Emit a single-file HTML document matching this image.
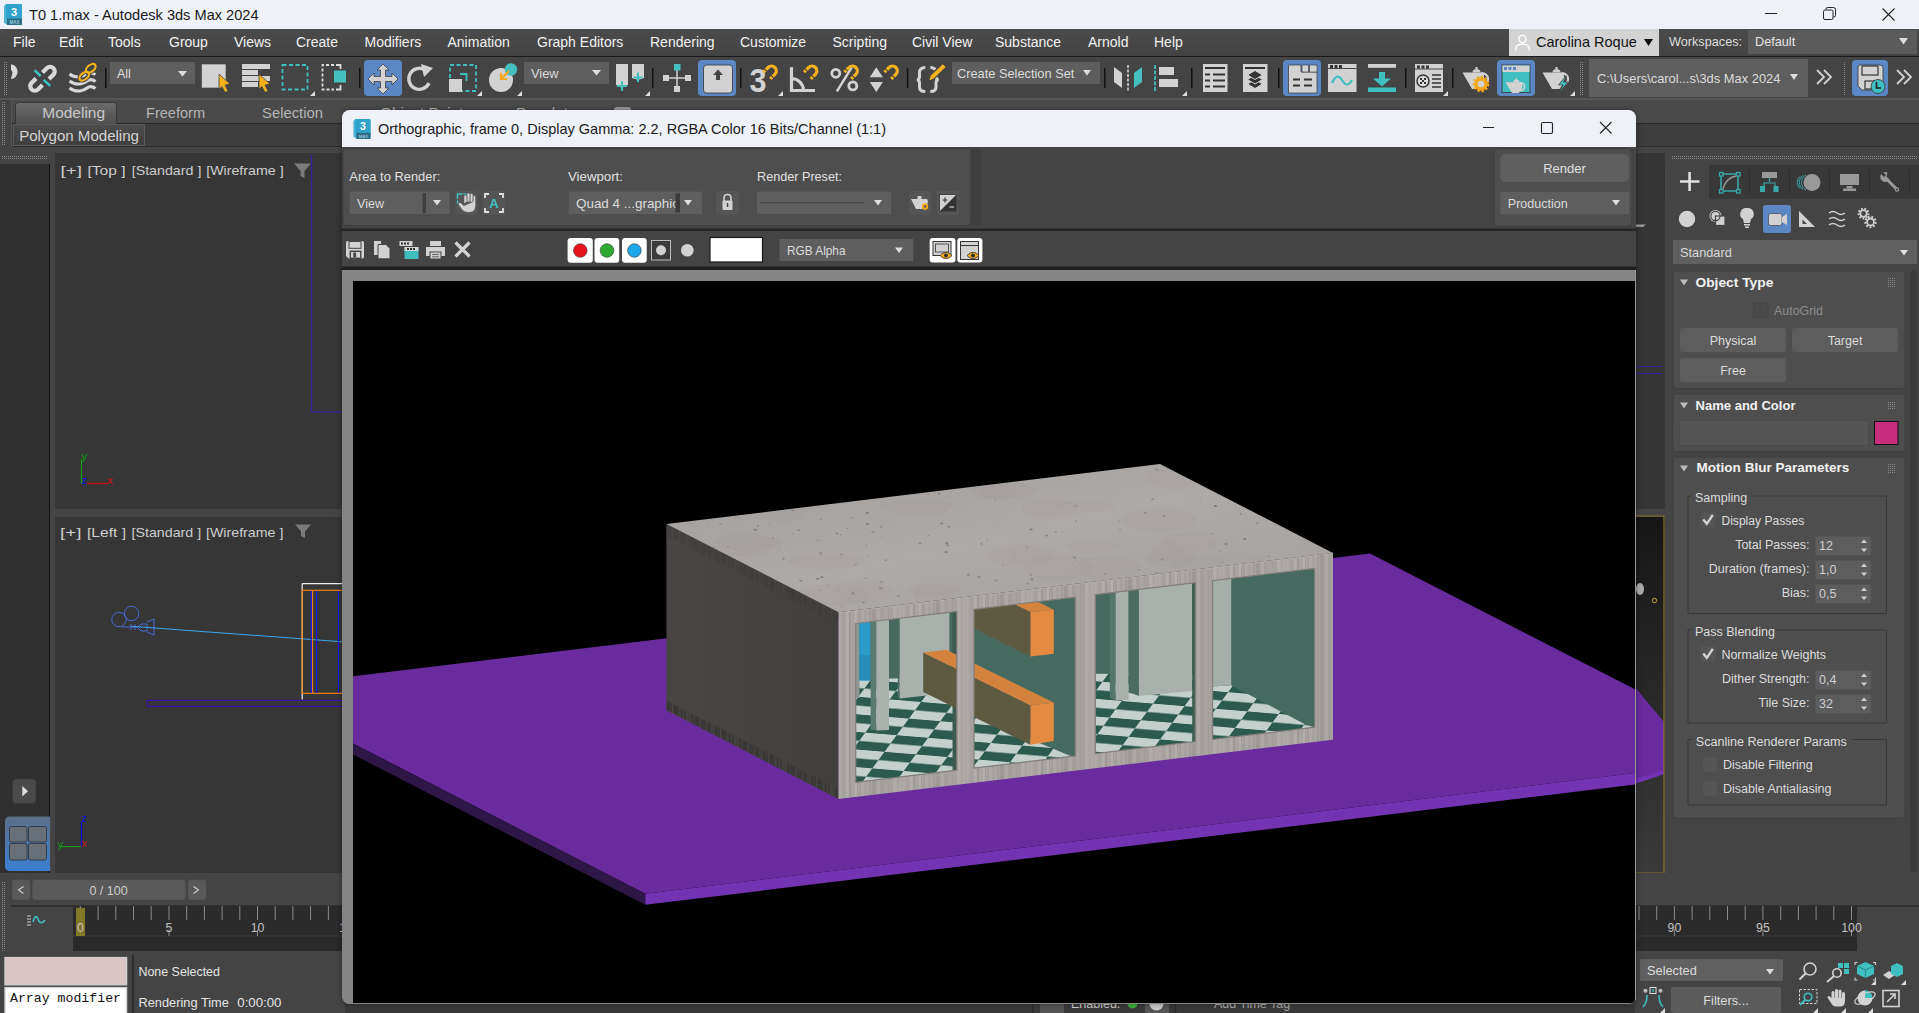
<!DOCTYPE html>
<html><head><meta charset="utf-8">
<style>
*{box-sizing:border-box;margin:0;padding:0}
html,body{width:1919px;height:1013px;overflow:hidden;background:#444}
body{position:relative;font-family:"Liberation Sans",sans-serif;color:#ddd}
.a{position:absolute}
.t{position:absolute;white-space:nowrap;line-height:1}
svg{position:absolute;overflow:visible}
</style></head><body>
<!-- TITLE BAR -->
<div class="a" style="left:0;top:0;width:1919px;height:29px;background:#eff1f8"></div>
<svg style="left:3px;top:4px" width="19" height="21" viewBox="0 0 19 21">
  <path d="M1 2 L3 0 H17 L19 2 V19 L18 21 H5 L1 19 Z" fill="#4fb3d6"/>
  <rect x="3" y="0" width="16" height="15" fill="#2fa3cc" rx="1"/>
  <rect x="4" y="14.5" width="15" height="6.5" fill="#2a6d85"/>
  <text x="11" y="12" font-family="Liberation Sans" font-weight="bold" font-size="11" fill="#fff" text-anchor="middle">3</text>
  <text x="11.5" y="19.8" font-family="Liberation Sans" font-weight="bold" font-size="4.5" fill="#9cc7d6" text-anchor="middle">MAX</text>
</svg>
<div class="t" style="left:29px;top:7.5px;font-size:14.6px;color:#1b1b1b">T0 1.max - Autodesk 3ds Max 2024</div>
<div class="a" style="left:1765px;top:13px;width:12px;height:1px;background:#222"></div>
<svg style="left:1823px;top:7px" width="13" height="13" viewBox="0 0 13 13"><path d="M3 2.5 V2 Q3 0.5 4.5 0.5 H10.5 Q12.5 0.5 12.5 2.5 V8.5 Q12.5 10 11 10 H10.5" fill="none" stroke="#222" stroke-width="1"/><rect x="0.5" y="3" width="9.5" height="9.5" rx="1.5" fill="none" stroke="#222" stroke-width="1"/></svg>
<svg style="left:1882px;top:8px" width="13" height="13" viewBox="0 0 13 13"><path d="M0.5 0.5 L12.5 12.5 M12.5 0.5 L0.5 12.5" stroke="#222" stroke-width="1.1"/></svg>

<!-- MENU BAR -->
<div class="a" style="left:0;top:29px;width:1919px;height:27px;background:linear-gradient(#4b4b4b,#434343)"></div>
<div class="a" style="left:0;top:55.5px;width:1919px;height:2px;background:#1c1c1c"></div>
<div class="t" style="top:35px;font-size:14px;color:#f2f2f2">
<span class="t" style="left:13px">File</span><span class="t" style="left:59px">Edit</span><span class="t" style="left:108px">Tools</span><span class="t" style="left:169px">Group</span><span class="t" style="left:234px">Views</span><span class="t" style="left:296px">Create</span><span class="t" style="left:364.5px">Modifiers</span><span class="t" style="left:447.5px">Animation</span><span class="t" style="left:537px">Graph Editors</span><span class="t" style="left:650px">Rendering</span><span class="t" style="left:740px">Customize</span><span class="t" style="left:832.5px">Scripting</span><span class="t" style="left:912px">Civil View</span><span class="t" style="left:995px">Substance</span><span class="t" style="left:1088px">Arnold</span><span class="t" style="left:1154px">Help</span>
</div>
<div class="a" style="left:1509px;top:29px;width:150px;height:27px;background:#d3d3d3"></div>
<svg style="left:1514px;top:34px" width="17" height="17" viewBox="0 0 17 17"><circle cx="8.5" cy="5" r="3.6" fill="none" stroke="#fff" stroke-width="1.4"/><path d="M1.5 16.5 Q1.5 10 8.5 10 Q15.5 10 15.5 16.5" fill="none" stroke="#fff" stroke-width="1.4"/></svg>
<div class="t" style="left:1536px;top:35px;font-size:14.5px;color:#111">Carolina Roque</div>
<svg style="left:1644px;top:39px" width="9" height="7"><path d="M0 0 H9 L4.5 7 Z" fill="#111"/></svg>
<div class="t" style="left:1669px;top:36px;font-size:12.7px;color:#ddd">Workspaces:</div>
<div class="a" style="left:1748px;top:30px;width:169px;height:24px;background:#5b5b5b"></div>
<div class="t" style="left:1755px;top:36px;font-size:12.7px;color:#e6e6e6">Default</div>
<svg style="left:1899px;top:38px" width="9" height="7"><path d="M0 0 H9 L4.5 6.5 Z" fill="#ddd"/></svg>

<!-- TOOLBAR -->
<div class="a" style="left:0;top:57px;width:1919px;height:43px;background:#444"></div>
<div class="a" style="left:0;top:98px;width:1919px;height:2px;background:#555"></div>
<svg style="left:0;top:0" width="1919" height="110" viewBox="0 0 1919 110">
<defs>
 <pattern id="dots" width="2" height="2" patternUnits="userSpaceOnUse"><rect width="1" height="1" fill="#8a8a8a"/></pattern>
</defs>
<g fill="none" stroke-linecap="butt">
<!-- grip -->
<rect x="3" y="61" width="4" height="35" fill="url(#dots)"/>
<!-- partial circle -->
<path d="M11 64.2 A7.5 7.5 0 0 1 11 79.1 L12.5 72.5 Q12.5 71 11 70Z" fill="#d9d9d9"/>
<!-- unlink -->
<path d="M42.5 72.5 L47 68 A4.6 4.6 0 0 1 53.5 74.5 L49 79" stroke="#d9d9d9" stroke-width="4.2"/>
<path d="M36 78.5 L31.5 83 A4.6 4.6 0 0 0 38 89.5 L42.5 85" stroke="#d9d9d9" stroke-width="4.2"/>
<path d="M34.6 70.2 L40.6 76.2 M43.7 79.8 L50.2 85.8" stroke="#3fc4c4" stroke-width="2.5"/>
<!-- bind space warp -->
<path d="M69.5 74 Q74 77.5 80 76.8 Q84 76 86 74 M87.5 73.5 Q91 72 95.5 74.5" stroke="#d9d9d9" stroke-width="3"/>
<path d="M69.5 81 Q74 84.5 80 84 Q84 83.5 87 81 Q91 78 95.5 81.5" stroke="#d9d9d9" stroke-width="3"/>
<path d="M69.5 88 Q74 91.5 80 91 Q84 90.5 87 88 Q91 85 95.5 88.5" stroke="#d9d9d9" stroke-width="3"/>
<ellipse cx="84.3" cy="76.2" rx="5.6" ry="3.3" transform="rotate(-40 84.3 76.2)" stroke="#444" stroke-width="4"/>
<ellipse cx="90.8" cy="68.3" rx="5.6" ry="3.3" transform="rotate(-40 90.8 68.3)" stroke="#444" stroke-width="4"/>
<ellipse cx="84.3" cy="76.2" rx="5.6" ry="3.3" transform="rotate(-40 84.3 76.2)" stroke="#f5b21c" stroke-width="2.2"/>
<ellipse cx="90.8" cy="68.3" rx="5.6" ry="3.3" transform="rotate(-40 90.8 68.3)" stroke="#f5b21c" stroke-width="2.2"/>
<!-- sep -->
<rect x="105" y="68" width="1.5" height="20" fill="#111"/>
<!-- All dropdown -->
<rect x="110" y="62" width="85" height="22" fill="#5e5e5e"/>
<path d="M178 71 H187 L182.5 76.5Z" fill="#ddd"/>
<!-- select object -->
<rect x="201.5" y="64" width="24.5" height="24" fill="#d2d2d2" stroke="#444" stroke-width="0.6"/>
<path d="M219 74 L230 84 L225 85 L228 91 L225 92.5 L222 86.5 L219 89Z" fill="#f5b01c" stroke="#444" stroke-width="0.8"/>
<!-- select by name -->
<rect x="242" y="64" width="28" height="5" fill="#d2d2d2"/><rect x="242" y="70" width="16" height="5" fill="#d2d2d2"/><rect x="242" y="76" width="28" height="5" fill="#d2d2d2"/><rect x="242" y="82" width="16" height="5" fill="#d2d2d2"/>
<path d="M259 74 L270 84 L265 85 L268 91 L265 92.5 L262 86.5 L259 89Z" fill="#f5b01c" stroke="#444" stroke-width="0.8"/>
<!-- rect selection -->
<rect x="282.5" y="65" width="25" height="24.5" stroke="#3fbfbf" stroke-width="1.8" stroke-dasharray="4 2.5"/>
<path d="M315 91 V96 H310Z" fill="#ddd"/>
<!-- window crossing -->
<path d="M334 65 H322.5 V89.5 H334" stroke="#ddd" stroke-width="1.8" stroke-dasharray="3 2"/>
<path d="M336 65 H340.5 V69 M340.5 85 V89.5 H336" stroke="#ddd" stroke-width="1.8"/>
<rect x="334" y="70.5" width="12" height="12" fill="#45bfbf"/>
<rect x="359" y="68" width="1.5" height="20" fill="#111"/>
<!-- move active -->
<rect x="364" y="60" width="38" height="36" rx="4" fill="#5b88c4"/>
<path d="M383 64 L389 70 H385.5 V76.5 H392 V73 L398 79 L392 85 V81.5 H385.5 V88 H389 L383 94 L377 88 H380.5 V81.5 H374 V85 L368 79 L374 73 V76.5 H380.5 V70 H377Z" fill="#d2d2d2" stroke="#333" stroke-width="0.7"/>
<!-- rotate -->
<path d="M429 83 A10.5 10.5 0 1 1 425 70" stroke="#d2d2d2" stroke-width="3.4"/>
<path d="M421 64 L433 68 L424 77Z" fill="#d2d2d2"/>
<!-- scale -->
<rect x="450" y="65" width="26" height="26" stroke="#3fbfbf" stroke-width="1.8" stroke-dasharray="4 2.5"/>
<rect x="449" y="79" width="13" height="13" fill="#d2d2d2"/>
<path d="M460 74 H466.5 V81" stroke="#3fbfbf" stroke-width="1.8"/>
<path d="M482 91 V96 H477Z" fill="#ddd"/>
<!-- place -->
<circle cx="501" cy="80" r="12" fill="#d2d2d2"/>
<circle cx="511" cy="69.5" r="6.2" fill="#45bfbf"/>
<path d="M509 71 L502 78 M501 73 V79 H507" stroke="#f5a81c" stroke-width="2.2"/>
<path d="M522 91 V96 H517Z" fill="#ddd"/>
<!-- View dropdown -->
<rect x="524" y="62" width="85" height="22" fill="#5e5e5e"/>
<path d="M592 70 H601 L596.5 75.5Z" fill="#ddd"/>
<!-- pivot -->
<path d="M616 64 H628 V85 L622 88 L616 85Z" fill="#d2d2d2"/>
<path d="M632 64 H644 V78 L638 80 L632 78Z" fill="#d2d2d2"/>
<path d="M622 81 V91 M617 86 H627 M638 72.5 V82 M633.5 77.5 H642.5" stroke="#3fbfbf" stroke-width="2"/>
<path d="M650 91 V96 H645Z" fill="#ddd"/>
<rect x="652" y="68" width="1.5" height="20" fill="#111"/>
<!-- manipulate -->
<path d="M677 70 V92 M664 78 H690" stroke="#d2d2d2" stroke-width="1.5"/>
<rect x="674" y="64" width="6.5" height="6.5" fill="#45bfbf"/>
<rect x="663" y="75" width="6" height="6" fill="#d2d2d2"/><rect x="685" y="75" width="6" height="6" fill="#d2d2d2"/><rect x="674" y="86" width="6" height="6" fill="#d2d2d2"/>
<!-- keyboard override active -->
<rect x="698" y="60" width="38" height="36" rx="4" fill="#5b88c4"/>
<rect x="703.5" y="65" width="29" height="28" rx="3" fill="#d2d2d2" stroke="#333" stroke-width="0.8"/>
<path d="M713 75 L718 69.5 L723 75 H720 V80 H716 V75Z" fill="#444"/>
<rect x="740" y="68" width="1.5" height="20" fill="#111"/>
<!-- snaps -->
<text x="749.4" y="91.9" font-family="Liberation Sans" font-weight="bold" font-size="34" fill="#d2d2d2" textLength="17" lengthAdjust="spacingAndGlyphs">3</text>
<g transform="translate(0 0)"><path d="M766 69.6 L768.1 67.5 A4.8 4.8 0 0 1 774.9 74.3 L772.8 76.4" stroke="#f5b21c" stroke-width="3.3"/><path d="M765.2 70.4 L763.5 72.1 M772 77.2 L770.3 78.9" stroke="#f5b21c" stroke-width="3.3"/></g>
<path d="M783 91 V96 H778Z" fill="#ddd"/>
<path d="M791.5 67.3 V90.5 H815 M791.5 78.5 A12 12 0 0 1 803.5 90.5" stroke="#d2d2d2" stroke-width="3.2"/>
<g transform="translate(40.5 0)"><path d="M766 69.6 L768.1 67.5 A4.8 4.8 0 0 1 774.9 74.3 L772.8 76.4" stroke="#f5b21c" stroke-width="3.3"/><path d="M765.2 70.4 L763.5 72.1 M772 77.2 L770.3 78.9" stroke="#f5b21c" stroke-width="3.3"/></g>
<circle cx="835.8" cy="73.3" r="4" stroke="#d2d2d2" stroke-width="2.8"/><circle cx="852.8" cy="85.9" r="4" stroke="#d2d2d2" stroke-width="2.8"/>
<path d="M836.9 91.4 L851.7 67.3" stroke="#d2d2d2" stroke-width="2.5"/>
<g transform="translate(81 0)"><path d="M766 69.6 L768.1 67.5 A4.8 4.8 0 0 1 774.9 74.3 L772.8 76.4" stroke="#f5b21c" stroke-width="3.3"/><path d="M765.2 70.4 L763.5 72.1 M772 77.2 L770.3 78.9" stroke="#f5b21c" stroke-width="3.3"/></g>
<path d="M869.8 77.2 H882.9 L876.3 67.3Z M869.8 82.1 H882.9 L876.3 91.9Z" fill="#d2d2d2"/>
<g transform="translate(121 0)"><path d="M766 69.6 L768.1 67.5 A4.8 4.8 0 0 1 774.9 74.3 L772.8 76.4" stroke="#f5b21c" stroke-width="3.3"/><path d="M765.2 70.4 L763.5 72.1 M772 77.2 L770.3 78.9" stroke="#f5b21c" stroke-width="3.3"/></g>
<rect x="906.8" y="68" width="1.5" height="20" fill="#111"/>
<!-- {} -->
<path d="M925.3 67.5 Q919.5 67.5 919.5 72.5 V76.5 Q919.5 79.5 917 79.8 Q919.5 80.2 919.5 83 V87 Q919.5 91.5 925.3 91.5" stroke="#d2d2d2" stroke-width="3"/>
<path d="M930.3 67.5 Q936 67.5 936 72.5 V76.5 Q936 79.5 938.5 79.8 Q936 80.2 936 83 V87 Q936 91.5 930.3 91.5" stroke="#d2d2d2" stroke-width="3"/>
<path d="M931 78.2 L944.7 65.1" stroke="#444" stroke-width="6.5"/>
<path d="M931.5 77.7 L944.2 65.6" stroke="#f5b21c" stroke-width="4"/>
<path d="M930 79.5 L932 77.5" stroke="#f5b21c" stroke-width="2"/>
<!-- Create Selection Set -->
<rect x="952" y="62" width="148" height="22" fill="#5e5e5e"/>
<path d="M1083 70 H1091 L1087 75.5Z" fill="#ddd"/>
<rect x="1104" y="68" width="1.5" height="20" fill="#111"/>
<!-- mirror -->
<path d="M1114 67 L1122 73 V88 L1114 82Z" fill="#d2d2d2"/>
<path d="M1128 65 V92" stroke="#d2d2d2" stroke-width="1.6" stroke-dasharray="3 1.5"/>
<path d="M1142 67 L1134 73 V88 L1142 82Z" fill="#45bfbf"/>
<!-- align -->
<path d="M1155 65 V92" stroke="#45bfbf" stroke-width="1.8" stroke-dasharray="4 1.5"/>
<rect x="1159" y="67" width="15" height="8" fill="#d2d2d2"/><rect x="1159" y="79" width="19" height="8" fill="#d2d2d2"/>
<path d="M1187 91 V96 H1182Z" fill="#ddd"/>
<rect x="1191" y="68" width="1.5" height="20" fill="#111"/>
<!-- scene explorer -->
<rect x="1203" y="64" width="24.5" height="28" fill="#d2d2d2"/>
<path d="M1205 68 H1225 M1205 74.5 H1210 M1213 74.5 H1225 M1205 80.5 H1210 M1213 80.5 H1225 M1205 86.5 H1210 M1213 86.5 H1225" stroke="#333" stroke-width="2"/>
<!-- layer explorer -->
<rect x="1243" y="64" width="24.5" height="28" fill="#d2d2d2"/>
<path d="M1245 68 H1265" stroke="#333" stroke-width="2"/>
<path d="M1255 79.5 L1262.5 84 L1255 88.5 L1247.5 84Z" fill="#333" stroke="#d2d2d2" stroke-width="1"/>
<path d="M1255 75 L1262.5 79.5 L1255 84 L1247.5 79.5Z" fill="#333" stroke="#d2d2d2" stroke-width="1"/>
<path d="M1255 70.5 L1262.5 75 L1255 79.5 L1247.5 75Z" fill="#333" stroke="#d2d2d2" stroke-width="1"/>
<rect x="1278" y="68" width="1.5" height="20" fill="#111"/>
<!-- ribbon toggle active -->
<rect x="1283" y="60" width="38" height="36" rx="4" fill="#5b88c4"/>
<path d="M1288.5 65 H1301 V72 H1317 V93 H1288.5Z" fill="#d2d2d2" stroke="#333" stroke-width="0.7"/>
<rect x="1302" y="65" width="6.5" height="7" fill="#d2d2d2" stroke="#333" stroke-width="0.6"/><rect x="1309.5" y="65" width="7.5" height="7" fill="#d2d2d2" stroke="#333" stroke-width="0.6"/>
<path d="M1293 79.5 H1300 M1304 79.5 H1312 M1293 85.5 H1300 M1304 85.5 H1312" stroke="#333" stroke-width="2.2"/>
<!-- curve editor -->
<rect x="1328" y="64" width="28.5" height="28" fill="#d2d2d2"/>
<path d="M1328 68.5 H1356.5" stroke="#444" stroke-width="1"/>
<rect x="1330" y="65" width="3" height="3" fill="#333"/><rect x="1334.5" y="65" width="3" height="3" fill="#333"/><rect x="1339" y="65" width="3" height="3" fill="#333"/>
<path d="M1332 83 Q1337 72 1342 80 Q1347 89 1352 80" stroke="#3fbfbf" stroke-width="2.2"/>
<!-- schematic -->
<rect x="1368" y="64" width="28" height="3.8" fill="#d2d2d2"/>
<rect x="1379" y="72" width="6" height="8" fill="#3fbfbf"/>
<path d="M1373 78.5 H1391 L1382 86.5Z" fill="#3fbfbf"/>
<rect x="1368" y="87.5" width="28" height="4.5" fill="#3fbfbf"/>
<rect x="1405" y="68" width="1.5" height="20" fill="#111"/>
<!-- material editor -->
<rect x="1415" y="64" width="28" height="28" fill="#d2d2d2"/>
<path d="M1415 69 H1443" stroke="#444" stroke-width="1"/>
<rect x="1417" y="65.5" width="3" height="3" fill="#333"/><rect x="1421.5" y="65.5" width="3" height="3" fill="#333"/><rect x="1426" y="65.5" width="3" height="3" fill="#333"/>
<circle cx="1423" cy="81" r="6" stroke="#333" stroke-width="1.5" fill="#ddd"/>
<path d="M1420 78 h2v2h-2z M1424 78 h2v2h-2z M1422 80 h2v2h-2z M1420 82 h2v2h-2z M1424 82 h2v2h-2z" fill="#333"/>
<path d="M1432 75 H1441 M1432 79 H1441 M1432 83 H1441 M1432 87 H1441" stroke="#333" stroke-width="1.6"/>
<path d="M1448 91 V96 H1443Z" fill="#ddd"/>
<rect x="1452" y="68" width="1.5" height="20" fill="#111"/>
<!-- render setup -->
<g transform="translate(1462 64)">
<path d="M0.5 8.5 H21.5 Q24 18 17.5 25 H10 Z" fill="#d2d2d2"/>
<path d="M19.5 9.5 A5.5 5.5 0 0 1 21.5 20.5" stroke="#d2d2d2" stroke-width="2.2"/>
<path d="M10.5 8.5 Q10.5 5.5 13.5 5.2 V3 H15.5 V5.2 Q18.5 5.5 18.5 8.5Z" fill="#d2d2d2"/>
<circle cx="19" cy="20" r="5" stroke="#f5a81c" stroke-width="3.4" fill="#d2d2d2"/>
<circle cx="19" cy="20" r="7.2" stroke="#f5a81c" stroke-width="2.2" stroke-dasharray="2.3 1.9"/>
</g>
<!-- rendered frame window active -->
<rect x="1497" y="60" width="38" height="36" rx="4" fill="#5b88c4"/>
<rect x="1502" y="65" width="28" height="27.5" fill="#3fbfbf" stroke="#333" stroke-width="0.8"/>
<rect x="1502.5" y="65.5" width="27" height="6.5" fill="#d2d2d2"/>
<rect x="1504" y="67" width="3" height="3" fill="#5b88c4"/><rect x="1508.5" y="67" width="3" height="3" fill="#5b88c4"/><rect x="1513" y="67" width="3" height="3" fill="#5b88c4"/>
<g transform="translate(1505 75.5) scale(0.78)">
<path d="M0.5 8.5 H21.5 Q24 18 17.5 22.5 H9 Z" fill="#d2d2d2"/>
<path d="M19.5 9.5 A5 5 0 0 1 20.5 19.5" stroke="#d2d2d2" stroke-width="2.2"/>
<path d="M10.5 8.5 Q10.5 5.5 13.5 5.2 V3.5 H15.5 V5.2 Q18.5 5.5 18.5 8.5Z" fill="#d2d2d2"/>
</g>
<!-- render production -->
<g transform="translate(1542 64)">
<path d="M0.5 8.5 H21.5 Q24 18 17.5 25 H10 Z" fill="#d2d2d2"/>
<path d="M19.5 9.5 A5.5 5.5 0 0 1 21.5 20.5" stroke="#d2d2d2" stroke-width="2.2"/>
<path d="M10.5 8.5 Q10.5 5.5 13.5 5.2 V3 H15.5 V5.2 Q18.5 5.5 18.5 8.5Z" fill="#d2d2d2"/>
<path d="M24 12 L16.5 21 H21 L17.5 28.5 L26 18 H21.5 L24.5 12Z" fill="#3fbfbf" stroke="#444" stroke-width="0.8"/>
</g>
<path d="M1575 91 V96 H1570Z" fill="#ddd"/>
<rect x="1580" y="61" width="3" height="35" fill="url(#dots)"/>
<!-- path dropdown -->
<rect x="1589" y="59" width="219" height="38" fill="#5e5e5e"/>
<path d="M1790 74 H1798 L1794 80Z" fill="#ddd"/>
<path d="M1817 70 L1824 77 L1817 84 M1824 70 L1831 77 L1824 84" stroke="#d2d2d2" stroke-width="1.8"/>
<rect x="1843" y="61" width="3" height="35" fill="url(#dots)"/>
<!-- save active -->
<rect x="1852" y="60" width="36" height="36" rx="4" fill="#5b88c4"/>
<path d="M1858 67 Q1858 65 1860 65 H1880 Q1883 65 1883 68 V86 Q1883 90 1879 90 H1862 L1858 86Z" fill="#d2d2d2" stroke="#333" stroke-width="0.8"/>
<rect x="1862" y="66" width="16" height="9" fill="#d2d2d2" stroke="#333" stroke-width="1.2"/>
<rect x="1865" y="81" width="12" height="8" fill="#d2d2d2" stroke="#333" stroke-width="1.2"/>
<circle cx="1878" cy="86.5" r="7" fill="#3fbfbf" stroke="#333" stroke-width="0.8"/>
<path d="M1876.5 82 V88 H1881" stroke="#222" stroke-width="1.6"/>
<path d="M1897 70 L1904 77 L1897 84 M1904 70 L1911 77 L1904 84" stroke="#d2d2d2" stroke-width="1.8"/>
</g>
<g font-family="Liberation Sans" fill="#dcdcdc">
<text x="117" y="78" font-size="12.5">All</text>
<text x="531" y="78" font-size="12.8">View</text>
<text x="957" y="77.5" font-size="12.8">Create Selection Set</text>
<text x="1597" y="82.5" font-size="12.9">C:\Users\carol...s\3ds Max 2024</text>
</g>
</svg>
<!-- RIBBON -->
<div class="a" style="left:0;top:100px;width:1919px;height:53px;background:#444"></div>
<svg style="left:0;top:0" width="1919" height="160" viewBox="0 0 1919 160">
<rect x="2" y="101" width="4" height="45" fill="url(#dots)"/>
<rect x="11.5" y="99.5" width="1920" height="47" fill="#4a4a4a" stroke="#575757" stroke-width="1"/>
<rect x="12" y="124" width="1920" height="22.5" fill="#3d3d3d"/>
<path d="M12 123.5 H1919" stroke="#2a2a2a" stroke-width="1"/>
<path d="M12 146.5 H1919" stroke="#2e2e2e" stroke-width="1"/>
<defs><linearGradient id="tabg" x1="0" y1="0" x2="0" y2="1"><stop offset="0" stop-color="#6b6b6b"/><stop offset="1" stop-color="#4f4f4f"/></linearGradient>
<linearGradient id="pmg" x1="0" y1="0" x2="0" y2="1"><stop offset="0" stop-color="#4c4c4c"/><stop offset="1" stop-color="#3e3e3e"/></linearGradient></defs>
<path d="M15.5 124 V105.5 Q15.5 102.5 18.5 102.5 H113.5 Q116.5 102.5 116.5 105.5 V124" fill="url(#tabg)" stroke="#353535" stroke-width="1"/>
<rect x="13.5" y="124.5" width="131" height="21" fill="url(#pmg)" stroke="#5a5a5a" stroke-width="1"/>
<g font-family="Liberation Sans" font-size="15.3" fill="#c9c9c9">
<text x="42.3" y="117.8" textLength="62.7" lengthAdjust="spacingAndGlyphs">Modeling</text>
<text x="146" y="117.8" fill="#b5b5b5" textLength="59" lengthAdjust="spacingAndGlyphs">Freeform</text>
<text x="262" y="117.8" fill="#b5b5b5" textLength="61" lengthAdjust="spacingAndGlyphs">Selection</text>
<text x="380" y="117.8" fill="#b5b5b5">Object Paint</text>
<text x="516" y="117.8" fill="#b5b5b5">Populate</text>
<rect x="614" y="107" width="17" height="8" rx="3" fill="#9a9a9a"/>
<text x="19.2" y="140.6" font-size="15.1" fill="#d4d4d4" textLength="119.8" lengthAdjust="spacingAndGlyphs">Polygon Modeling</text>
</g>
</svg>

<!-- LEFT PANEL + VIEWPORTS -->
<div class="a" style="left:0;top:153px;width:1919px;height:725px;background:#444"></div>
<div class="a" style="left:0;top:164px;width:50px;height:709px;background:#2f2f2f;border-right:1px solid #111"></div>
<div class="a" style="left:55px;top:153px;width:300px;height:356px;background:#363636"></div>
<div class="a" style="left:55px;top:517px;width:300px;height:356px;background:#363636"></div>
<svg style="left:0;top:0" width="1919" height="1013" viewBox="0 0 1919 1013">
<rect x="2" y="155" width="46" height="4" fill="url(#dots)"/>
<rect x="1672" y="155" width="246" height="4" fill="url(#dots)"/>
<g font-family="Liberation Sans" font-size="13.6" fill="#cdcdcd">
<text x="60.5" y="174.8" textLength="21.5" lengthAdjust="spacingAndGlyphs">[+]</text>
<text x="87.5" y="174.8" textLength="38" lengthAdjust="spacingAndGlyphs">[Top ]</text>
<text x="131.7" y="174.8" textLength="69.7" lengthAdjust="spacingAndGlyphs">[Standard ]</text>
<text x="206.2" y="174.8" textLength="77.4" lengthAdjust="spacingAndGlyphs">[Wireframe ]</text>
<text x="60" y="536.5" textLength="21.5" lengthAdjust="spacingAndGlyphs">[+]</text>
<text x="87" y="536.5" textLength="39" lengthAdjust="spacingAndGlyphs">[Left ]</text>
<text x="131.5" y="536.5" textLength="69.7" lengthAdjust="spacingAndGlyphs">[Standard ]</text>
<text x="206" y="536.5" textLength="77.4" lengthAdjust="spacingAndGlyphs">[Wireframe ]</text>
</g>
<path d="M294 163.5 H311 L304.5 171 V178 L300.5 176 V171Z" fill="#7a7a7a"/>
<path d="M295 524.5 H311 L305 531.5 V538 L301 536 V531.5Z" fill="#7a7a7a"/>
<path d="M311.5 155 V411.8 H345" stroke="#3b1fa0" stroke-width="1.3" fill="none"/>
<!-- axis top -->
<path d="M81.5 459.2 V483.8" stroke="#12a012" stroke-width="1.2"/>
<path d="M87 483.5 H107.5" stroke="#d01010" stroke-width="1.2"/>
<g font-family="Liberation Sans" font-size="11.5">
<text x="81.5" y="460" fill="#12a012">y</text>
<text x="81.5" y="484" fill="#1010e0">z</text>
<text x="107" y="484" fill="#d01010">x</text>
</g>
<!-- left viewport wireframe -->
<circle cx="119" cy="619.5" r="7.2" fill="none" stroke="#4a6ad8" stroke-width="1"/>
<circle cx="131.6" cy="613.5" r="7.2" fill="none" stroke="#4a6ad8" stroke-width="1"/>
<path d="M122 627 H138 L141 624 H147 V631 H141 L138 628 M131 624 V630 M135 624 V630 M147 622 L154 619 V635 L147 632" fill="none" stroke="#4a6ad8" stroke-width="1"/>
<path d="M131.1 626.3 L345 642" stroke="#3aa8f0" stroke-width="1.1"/>
<path d="M302.2 583.6 H345 M302.2 583.6 V699.6" stroke="#f0f0f0" stroke-width="1.2" fill="none"/>
<rect x="302.2" y="590.3" width="45" height="103" fill="none" stroke="#f08010" stroke-width="1.2"/>
<path d="M312.6 590 V693.5" stroke="#f08010" stroke-width="1.1"/>
<path d="M311.3 591 V693 M316.6 591 V693 M338.5 591 V693" stroke="#1a1aff" stroke-width="1.1"/>
<rect x="147.5" y="700.4" width="200" height="5.9" fill="none" stroke="#3b10b0" stroke-width="1.2"/>
<!-- axis left -->
<path d="M81.5 822 V846.6" stroke="#1010e0" stroke-width="1.2"/>
<path d="M59.6 846.6 H81" stroke="#1c9a1c" stroke-width="1.2"/>
<g font-family="Liberation Sans" font-size="10">
<text x="81.5" y="822" fill="#1010e0" font-size="11">z</text>
<text x="57.5" y="848" fill="#1c9a1c" font-size="11">y</text>
<text x="81.5" y="847" fill="#c01818" font-size="11">x</text>
</g>
<!-- play button -->
<rect x="12.5" y="779" width="23.5" height="24.5" rx="3.5" fill="#4a4a4a" stroke="#3a3a3a" stroke-width="0.8"/>
<path d="M22.3 786 L28 791.3 L22.3 796.6Z" fill="#dedede"/>
<!-- quad icon -->
<defs><linearGradient id="quadg" x1="0" y1="0" x2="0" y2="1"><stop offset="0" stop-color="#5c6f88"/><stop offset="1" stop-color="#3a80d2"/></linearGradient></defs>
<path d="M10 816.6 H50 V871 H10 Q5 871 5 866 V821.6 Q5 816.6 10 816.6Z" fill="url(#quadg)"/>
<g fill="#677079" stroke="#2f3640" stroke-width="0.9">
<rect x="9.5" y="826.5" width="17.5" height="15.5" rx="2"/><rect x="28.5" y="826.5" width="18" height="15.5" rx="2"/>
<rect x="9.5" y="843.5" width="17.5" height="16.5" rx="2"/><rect x="28.5" y="843.5" width="18" height="16.5" rx="2"/>
</g>
<!-- right edge viewports -->
<rect x="1636" y="153" width="29" height="356" fill="#353535"/>
<defs><linearGradient id="vpg" x1="0" y1="0" x2="0" y2="1"><stop offset="0" stop-color="#161616"/><stop offset="1" stop-color="#3a3a3a"/></linearGradient></defs>
<rect x="1636" y="517" width="29" height="356" fill="url(#vpg)"/>
<path d="M1636 366.5 H1662 M1636 373.5 H1662" stroke="#3b1fa0" stroke-width="1.2"/>
<path d="M1636 224.5 H1646 L1643 227 H1636Z" fill="#9a9a9a"/>
<path d="M1636 688.6 L1664 722 V774 L1636 783.5Z" fill="#6a2b9f"/><path d="M1636 779 L1664 770 V774 L1636 783.5Z" fill="#7433b2"/>
<ellipse cx="1640" cy="589" rx="4" ry="6" fill="#aaa"/><circle cx="1654.5" cy="600.5" r="2.2" fill="none" stroke="#c9a640" stroke-width="1"/>
<path d="M1636 516 H1664 V873 H1636" fill="none" stroke="#8a7530" stroke-width="1.2"/>
</svg>
<!-- COMMAND PANEL -->
<svg style="left:0;top:0" width="1919" height="1013" viewBox="0 0 1919 1013">
<rect x="1665" y="153" width="254" height="753" fill="#444"/>
<rect x="1672" y="155" width="246" height="4" fill="url(#dots)"/>
<rect x="1670.5" y="164.8" width="249" height="34" fill="#383838"/>
<rect x="1670.5" y="164.8" width="38.5" height="34.5" fill="#444"/>
<path d="M1749.5 170 V193 M1789.5 170 V193 M1829.5 170 V193 M1869.5 170 V193 M1909.5 170 V193" stroke="#2c2c2c" stroke-width="1"/>
<!-- tab icons -->
<path d="M1689.6 172 V191 M1680 181.5 H1699.5" stroke="#e0e0e0" stroke-width="2.6"/>
<g fill="none" stroke="#3aa8a8" stroke-width="1.3">
<rect x="1719.5" y="172.5" width="3.5" height="3.5"/><rect x="1736.5" y="172.5" width="3.5" height="3.5"/><rect x="1719.5" y="189.5" width="3.5" height="3.5"/><rect x="1736.5" y="189.5" width="3.5" height="3.5"/>
<path d="M1723 174 H1736.5 M1723 191 H1736.5 M1721 176 V189.5 M1738 176 V189.5" stroke-width="1.6"/>
</g>
<path d="M1723 189 Q1726 178 1736 176" stroke="#999" stroke-width="1.4" fill="none"/>
<rect x="1762" y="172" width="15" height="6" fill="#999"/>
<path d="M1769.5 178 V182 M1764 186 V183 H1775 V186" stroke="#3aa8a8" stroke-width="1.2" fill="none"/>
<rect x="1760" y="186" width="5" height="6" fill="#3aa8a8"/><rect x="1773.5" y="186" width="5" height="6" fill="#3aa8a8"/>
<circle cx="1812" cy="182.5" r="8.5" fill="#999"/>
<path d="M1806 175 A8.5 8.5 0 0 0 1806 190 M1803 175.5 A8.5 8.5 0 0 0 1803 189.5 M1800 176.5 A8 8 0 0 0 1800 188.5" stroke="#3aa8a8" stroke-width="1" fill="none"/>
<rect x="1840" y="174" width="19" height="11" fill="#999"/>
<rect x="1846.5" y="186" width="6" height="2.5" fill="#999"/><rect x="1843" y="188.5" width="13" height="2.5" fill="#999"/>
<path d="M1886 178.5 L1896.5 189" stroke="#999" stroke-width="3"/>
<path d="M1887.5 172.5 A5 5 0 1 0 1889.5 179.5 L1886.5 176.5 Z" fill="#999"/>
<path d="M1881.5 172.5 L1885 176" stroke="#383838" stroke-width="2.5"/>
<circle cx="1897" cy="189.5" r="1.6" fill="#383838" stroke="#999" stroke-width="1.2"/>
<!-- sub tab icons -->
<circle cx="1687" cy="219" r="8.2" fill="#d2d2d2"/>
<circle cx="1715.5" cy="216" r="6" fill="#d2d2d2"/>
<rect x="1715.5" y="216" width="9.5" height="9.5" fill="#d2d2d2" stroke="#444" stroke-width="1.2"/>
<circle cx="1715.5" cy="216" r="4.6" fill="none" stroke="#444" stroke-width="1.2"/>
<path d="M1747 208 A6 6 0 0 1 1751 219 L1750 223 H1744 L1743 219 A6 6 0 0 1 1747 208Z" fill="#d2d2d2"/>
<rect x="1744" y="224" width="6" height="1.5" fill="#d2d2d2"/><rect x="1745" y="226.5" width="4" height="1.5" fill="#d2d2d2"/>
<rect x="1763" y="205" width="28" height="28" rx="3" fill="#5b88c4"/>
<rect x="1768.5" y="213.5" width="13.5" height="12" rx="2" fill="#d2d2d2" stroke="#333" stroke-width="0.6"/>
<path d="M1782 217 L1787 214 V225 L1782 222Z" fill="#d2d2d2"/>
<path d="M1799 211 V227 H1815Z M1802.5 219.5 V224 H1807Z" fill="#d2d2d2" fill-rule="evenodd"/>
<path d="M1829 213 Q1833 210 1837 213 Q1841 216 1845 213 M1829 219 Q1833 216 1837 219 Q1841 222 1845 219 M1829 225 Q1833 222 1837 225 Q1841 228 1845 225" stroke="#d2d2d2" stroke-width="1.5" fill="none"/>
<circle cx="1863.5" cy="213.5" r="3.3" fill="none" stroke="#d2d2d2" stroke-width="1.8"/>
<circle cx="1863.5" cy="213.5" r="5" fill="none" stroke="#d2d2d2" stroke-width="1.8" stroke-dasharray="1.8 1.6"/>
<circle cx="1870.5" cy="222" r="3.5" fill="none" stroke="#d2d2d2" stroke-width="1.8"/>
<circle cx="1870.5" cy="222" r="5.3" fill="none" stroke="#d2d2d2" stroke-width="1.8" stroke-dasharray="1.9 1.7"/>
<!-- Standard dropdown -->
<rect x="1673" y="240" width="244" height="24" fill="#606060"/>
<path d="M1900 250 H1908 L1904 255.5Z" fill="#ddd"/>
<text x="1680" y="256.6" font-family="Liberation Sans" font-size="13" fill="#dadada" textLength="51.8" lengthAdjust="spacingAndGlyphs">Standard</text>
<!-- scrollbar -->
<rect x="1910" y="270" width="7" height="602" rx="3.5" fill="#3b3b3b"/>
<!-- Object Type rollout -->
<rect x="1673" y="271" width="232" height="117.5" rx="3" fill="#4e4e4e" stroke="#3c3c3c" stroke-width="0.8"/>
<path d="M1680 279.5 H1688 L1684 285.5Z" fill="#bbb"/>
<g fill="#8a8a8a"><rect x="1888" y="278" width="8" height="9" fill="url(#dots)"/></g>
<rect x="1753.5" y="303" width="14.5" height="14" fill="#4a4a4a" stroke="#444" stroke-width="0.8"/>
<rect x="1680" y="328" width="106" height="24" rx="3" fill="#5d5d5d"/>
<rect x="1792" y="328" width="106" height="24" rx="3" fill="#5d5d5d"/>
<rect x="1680" y="358" width="106" height="24" rx="3" fill="#5d5d5d"/>
<!-- Name and Color -->
<rect x="1673" y="394" width="232" height="57.5" rx="3" fill="#4e4e4e" stroke="#3c3c3c" stroke-width="0.8"/>
<path d="M1680 402.5 H1688 L1684 408.5Z" fill="#bbb"/>
<rect x="1888" y="401" width="8" height="9" fill="url(#dots)"/>
<rect x="1679.5" y="420.5" width="189" height="25" fill="#555" stroke="#484848" stroke-width="0.8"/>
<rect x="1874.5" y="421.5" width="23.5" height="23" fill="#c72d7c" stroke="#111" stroke-width="1"/>
<!-- Motion blur -->
<rect x="1673" y="457" width="232" height="361" rx="3" fill="#4e4e4e" stroke="#3c3c3c" stroke-width="0.8"/>
<path d="M1680 465.5 H1688 L1684 471.5Z" fill="#bbb"/>
<rect x="1888" y="464" width="8" height="9" fill="url(#dots)"/>
<g fill="none" stroke="#383838" stroke-width="1">
<path d="M1692 496 H1688 V613.5 H1886.5 V496 H1751"/>
<path d="M1692 630 H1688 V723 H1886.5 V630 H1775"/>
<path d="M1692 739.5 H1688 V805 H1886.5 V739.5 H1852"/>
</g>
<g fill="#555"><rect x="1700.5" y="512.5" width="15" height="15" rx="1"/><rect x="1700.5" y="646.5" width="15" height="15" rx="1"/><rect x="1703" y="757.5" width="14" height="14" rx="1"/><rect x="1703" y="781.5" width="14" height="14" rx="1"/></g>
<path d="M1703.3 519.5 L1706.8 523.8 L1712.8 514.8 M1703.3 653.5 L1706.8 657.8 L1712.8 648.8" stroke="#d6d6d6" stroke-width="2.3" fill="none"/>
<g fill="#5d5d5d"><rect x="1815.5" y="536.5" width="55.5" height="19"/><rect x="1815.5" y="560.5" width="55.5" height="19"/><rect x="1815.5" y="584.5" width="55.5" height="19"/><rect x="1815.5" y="670.5" width="55.5" height="19"/><rect x="1815.5" y="694.5" width="55.5" height="19"/></g>
<g fill="#d0d0d0">
<path d="M1861 543 L1864 539.5 L1867 543Z M1861 548.5 L1864 552 L1867 548.5Z"/>
<path d="M1861 567 L1864 563.5 L1867 567Z M1861 572.5 L1864 576 L1867 572.5Z"/>
<path d="M1861 591 L1864 587.5 L1867 591Z M1861 596.5 L1864 600 L1867 596.5Z"/>
<path d="M1861 677 L1864 673.5 L1867 677Z M1861 682.5 L1864 686 L1867 682.5Z"/>
<path d="M1861 701 L1864 697.5 L1867 701Z M1861 706.5 L1864 710 L1867 706.5Z"/>
</g>
<g font-family="Liberation Sans" fill="#dcdcdc">
<text x="1695.5" y="286.5" font-size="13.5" font-weight="bold" fill="#f2f2f2" textLength="77.8" lengthAdjust="spacingAndGlyphs">Object Type</text>
<text x="1774" y="315" font-size="12.5" fill="#8c8c8c" textLength="49" lengthAdjust="spacingAndGlyphs">AutoGrid</text>
<text x="1733" y="345" font-size="12.5" text-anchor="middle">Physical</text>
<text x="1845" y="345" font-size="12.5" text-anchor="middle">Target</text>
<text x="1733" y="375" font-size="12.5" text-anchor="middle">Free</text>
<text x="1695.5" y="410" font-size="13.5" font-weight="bold" fill="#f2f2f2" textLength="100" lengthAdjust="spacingAndGlyphs">Name and Color</text>
<text x="1696.5" y="472.4" font-size="13.5" font-weight="bold" fill="#f2f2f2" textLength="152.8" lengthAdjust="spacingAndGlyphs">Motion Blur Parameters</text>
<text x="1695" y="501.5" font-size="12.5">Sampling</text>
<text x="1721.4" y="525" font-size="12.5" textLength="82.8" lengthAdjust="spacingAndGlyphs">Display Passes</text>
<text x="1809.5" y="549" font-size="12.5" text-anchor="end">Total Passes:</text>
<text x="1809.5" y="573" font-size="12.5" text-anchor="end">Duration (frames):</text>
<text x="1809.5" y="597" font-size="12.5" text-anchor="end">Bias:</text>
<text x="1819" y="550" font-size="12.5" fill="#cfcfcf">12</text>
<text x="1819" y="574" font-size="12.5" fill="#cfcfcf">1,0</text>
<text x="1819" y="598" font-size="12.5" fill="#cfcfcf">0,5</text>
<text x="1695" y="636" font-size="12.5">Pass Blending</text>
<text x="1721.4" y="659" font-size="12.5">Normalize Weights</text>
<text x="1809.5" y="683" font-size="12.5" text-anchor="end">Dither Strength:</text>
<text x="1809.5" y="707" font-size="12.5" text-anchor="end">Tile Size:</text>
<text x="1819" y="684" font-size="12.5" fill="#cfcfcf">0,4</text>
<text x="1819" y="708" font-size="12.5" fill="#cfcfcf">32</text>
<text x="1695.8" y="745.5" font-size="12.5" textLength="151" lengthAdjust="spacingAndGlyphs">Scanline Renderer Params</text>
<text x="1723" y="769.3" font-size="12.5">Disable Filtering</text>
<text x="1723" y="793.4" font-size="12.5">Disable Antialiasing</text>
</g>
</svg>
<!-- BOTTOM -->
<svg style="left:0;top:0" width="1919" height="1013" viewBox="0 0 1919 1013">
<rect x="0" y="873" width="1919" height="140" fill="#444"/>
<rect x="2" y="881.5" width="3" height="69" fill="url(#dots)"/>
<rect x="12.2" y="879.7" width="17.8" height="20" rx="3" fill="#595959"/>
<rect x="32.3" y="879.7" width="153.4" height="20" rx="3" fill="#595959"/>
<rect x="188" y="879.7" width="18" height="20" rx="3" fill="#595959"/>
<path d="M23.5 886.5 L18.5 890 L23.5 893.5 M193.5 886.5 L198.5 890 L193.5 893.5" stroke="#cfcfcf" stroke-width="1.1" fill="none"/>
<text x="108.5" y="895" font-family="Liberation Sans" font-size="12.5" fill="#cfcfcf" text-anchor="middle">0 / 100</text>
<rect x="11" y="905.5" width="1908" height="1" fill="#1e1e1e"/>
<rect x="73" y="906" width="1784" height="30" fill="#2b2b2b"/>
<rect x="73" y="936" width="1784" height="15" fill="#2a2a2a"/>
<rect x="73" y="935.5" width="1784" height="1" fill="#3a3a3a"/>
<path d="M80.4 906 V920 M80.4 929.5 V936 M98.1 906 V920 M115.8 906 V920 M133.5 906 V920 M151.2 906 V920 M169.0 906 V920 M169.0 929.5 V936 M186.7 906 V920 M204.4 906 V920 M222.1 906 V920 M239.8 906 V920 M257.5 906 V920 M257.5 929.5 V936 M275.2 906 V920 M292.9 906 V920 M310.6 906 V920 M328.4 906 V920 M346.1 906 V920 M346.1 929.5 V936 M363.8 906 V920 M381.5 906 V920 M399.2 906 V920 M416.9 906 V920 M434.6 906 V920 M434.6 929.5 V936 M452.3 906 V920 M470.0 906 V920 M487.8 906 V920 M505.5 906 V920 M523.2 906 V920 M523.2 929.5 V936 M540.9 906 V920 M558.6 906 V920 M576.3 906 V920 M594.0 906 V920 M611.7 906 V920 M611.7 929.5 V936 M629.4 906 V920 M647.2 906 V920 M664.9 906 V920 M682.6 906 V920 M700.3 906 V920 M700.3 929.5 V936 M718.0 906 V920 M735.7 906 V920 M753.4 906 V920 M771.1 906 V920 M788.8 906 V920 M788.8 929.5 V936 M806.6 906 V920 M824.3 906 V920 M842.0 906 V920 M859.7 906 V920 M877.4 906 V920 M877.4 929.5 V936 M895.1 906 V920 M912.8 906 V920 M930.5 906 V920 M948.2 906 V920 M965.9 906 V920 M965.9 929.5 V936 M983.7 906 V920 M1001.4 906 V920 M1019.1 906 V920 M1036.8 906 V920 M1054.5 906 V920 M1054.5 929.5 V936 M1072.2 906 V920 M1089.9 906 V920 M1107.6 906 V920 M1125.3 906 V920 M1143.1 906 V920 M1143.1 929.5 V936 M1160.8 906 V920 M1178.5 906 V920 M1196.2 906 V920 M1213.9 906 V920 M1231.6 906 V920 M1231.6 929.5 V936 M1249.3 906 V920 M1267.0 906 V920 M1284.7 906 V920 M1302.5 906 V920 M1320.2 906 V920 M1320.2 929.5 V936 M1337.9 906 V920 M1355.6 906 V920 M1373.3 906 V920 M1391.0 906 V920 M1408.7 906 V920 M1408.7 929.5 V936 M1426.4 906 V920 M1444.1 906 V920 M1461.9 906 V920 M1479.6 906 V920 M1497.3 906 V920 M1497.3 929.5 V936 M1515.0 906 V920 M1532.7 906 V920 M1550.4 906 V920 M1568.1 906 V920 M1585.8 906 V920 M1585.8 929.5 V936 M1603.5 906 V920 M1621.3 906 V920 M1639.0 906 V920 M1656.7 906 V920 M1674.4 906 V920 M1674.4 929.5 V936 M1692.1 906 V920 M1709.8 906 V920 M1727.5 906 V920 M1745.2 906 V920 M1762.9 906 V920 M1762.9 929.5 V936 M1780.7 906 V920 M1798.4 906 V920 M1816.1 906 V920 M1833.8 906 V920 M1851.5 906 V920 M1851.5 929.5 V936" stroke="#8a8a8a" stroke-width="1"/>
<rect x="76" y="907.8" width="9" height="28.2" fill="#8a8127" opacity="0.9"/>
<g font-family="Liberation Sans" font-size="12.3" fill="#c4c4c4">
<text x="80.4" y="932.2" text-anchor="middle">0</text><text x="169.0" y="932.2" text-anchor="middle">5</text><text x="257.5" y="932.2" text-anchor="middle">10</text><text x="346.1" y="932.2" text-anchor="middle">15</text><text x="434.6" y="932.2" text-anchor="middle">20</text><text x="523.2" y="932.2" text-anchor="middle">25</text><text x="611.7" y="932.2" text-anchor="middle">30</text><text x="700.3" y="932.2" text-anchor="middle">35</text><text x="788.8" y="932.2" text-anchor="middle">40</text><text x="877.4" y="932.2" text-anchor="middle">45</text><text x="965.9" y="932.2" text-anchor="middle">50</text><text x="1054.5" y="932.2" text-anchor="middle">55</text><text x="1143.1" y="932.2" text-anchor="middle">60</text><text x="1231.6" y="932.2" text-anchor="middle">65</text><text x="1320.2" y="932.2" text-anchor="middle">70</text><text x="1408.7" y="932.2" text-anchor="middle">75</text><text x="1497.3" y="932.2" text-anchor="middle">80</text><text x="1585.8" y="932.2" text-anchor="middle">85</text><text x="1674.4" y="932.2" text-anchor="middle">90</text><text x="1762.9" y="932.2" text-anchor="middle">95</text><text x="1851.5" y="932.2" text-anchor="middle">100</text>
</g>
<path d="M27 916 H31 M27 919 H31 M27 922 H31 M27 925 H31" stroke="#ddd" stroke-width="0.9"/>
<path d="M33 922 Q35.5 913 38 919 Q40.5 926 45 920" stroke="#3fbfbf" stroke-width="1.6" fill="none"/>
<!-- status -->
<rect x="5" y="957.6" width="121.6" height="27.2" fill="#dcc4c4" stroke="#cfcfcf" stroke-width="1.4"/>
<rect x="5" y="987.6" width="121.6" height="30" fill="#fff" stroke="#cfcfcf" stroke-width="1.4"/>
<text x="10" y="1001.6" font-family="Liberation Mono" font-size="13.4" fill="#111" textLength="111" lengthAdjust="spacingAndGlyphs">Array modifier</text>
<rect x="132" y="955" width="2" height="58" fill="#2c2c2c"/>
<text x="138.5" y="976.3" font-family="Liberation Sans" font-size="12.6" fill="#e6e6e6" textLength="81.4" lengthAdjust="spacingAndGlyphs">None Selected</text>
<text x="138.5" y="1007.3" font-family="Liberation Sans" font-size="12.6" fill="#e6e6e6" textLength="90.4" lengthAdjust="spacingAndGlyphs">Rendering Time</text><text x="237.3" y="1007.3" font-family="Liberation Sans" font-size="12.6" fill="#e6e6e6" textLength="44.1" lengthAdjust="spacingAndGlyphs">0:00:00</text>
<!-- status row behind window -->
<rect x="345" y="996" width="1290" height="17" fill="#393939"/>
<path d="M1032.7 995 V1013 M1175.4 995 V1013" stroke="#2a2a2a" stroke-width="1.5"/>
<rect x="1040" y="995" width="24" height="18" fill="#555"/>
<rect x="1145" y="995" width="24" height="18" fill="#555"/>
<text x="1071" y="1007.5" font-family="Liberation Sans" font-size="12.5" fill="#ccc">Enabled:</text>
<circle cx="1132.4" cy="1003.5" r="5" fill="#3ab03a"/>
<circle cx="1156.5" cy="1003.5" r="7" fill="#ccc"/>
<text x="1214" y="1007.5" font-family="Liberation Sans" font-size="12.5" fill="#aaa">Add Time Tag</text>
<!-- bottom right -->
<rect x="1640" y="959.2" width="143" height="21.7" fill="#606060"/>
<text x="1647" y="975" font-family="Liberation Sans" font-size="12.8" fill="#dcdcdc">Selected</text>
<path d="M1766 969 H1774 L1770 974.5Z" fill="#ddd"/>
<rect x="1671" y="987" width="110" height="26" rx="3" fill="#5c5c5c"/>
<text x="1726" y="1005" font-family="Liberation Sans" font-size="12.8" fill="#dcdcdc" text-anchor="middle">Filters...</text>
<g fill="none" stroke="#d2d2d2" stroke-width="1.6">
<circle cx="1810" cy="969" r="6"/><path d="M1805.5 973.5 L1799.5 979.5" stroke-width="2"/>
<circle cx="1837" cy="973" r="4.2"/><path d="M1834 976 L1827 982" stroke-width="2"/>
<path d="M1855 965 V962.5 H1857.5 M1873 962.5 H1875.5 V965 M1855 977.5 V980 H1857.5 M1873 980 H1875.5 V977.5" stroke-width="1.1"/>
<rect x="1799.5" y="989.5" width="17.5" height="14" stroke-dasharray="2.5 1.5" stroke-width="1"/>
<circle cx="1808" cy="997" r="3.8" stroke="#3fbfbf"/><path d="M1805 1000 L1800 1005" stroke="#3fbfbf" stroke-width="2"/>
<rect x="1883" y="990.5" width="16" height="16"/>
<path d="M1887 1002 L1895 994 M1890 994 H1895 V999"/>
</g>
<rect x="1838" y="963" width="5" height="5" fill="#3fbfbf"/><rect x="1844" y="963" width="5" height="5" fill="#3fbfbf"/><rect x="1844" y="969" width="5" height="5" fill="#3fbfbf"/>
<path d="M1857 966 L1865.5 962 L1874 966 V974 L1865.5 978 L1857 974Z" fill="#3fbfbf"/>
<path d="M1857 966 L1865.5 970 L1874 966 M1865.5 970 V978" stroke="#2a8a8a" stroke-width="1" fill="none"/>
<path d="M1883 975 L1889 971 L1895 975 L1889 979Z" fill="#d2d2d2"/>
<path d="M1891 966 L1897 963 L1903 966 V974 L1897 977 L1891 974Z" fill="#3fbfbf"/>
<g fill="#d2d2d2">
<rect x="1831.5" y="991" width="3" height="10" rx="1.5"/><rect x="1835" y="989" width="3" height="11" rx="1.5"/><rect x="1838.5" y="989.5" width="3" height="11" rx="1.5"/><rect x="1842" y="992" width="3" height="9" rx="1.5"/>
<path d="M1831.5 998 H1845 V1001 Q1845 1006.5 1840 1006.5 H1836 Q1833 1006.5 1831 1003 L1827.5 997.5 Q1827 996 1828.5 996 Q1830 996 1831.5 998Z"/>
</g>
<circle cx="1865" cy="998" r="7.5" fill="#d2d2d2"/><path d="M1865 990.5 A7.5 7.5 0 0 1 1872.5 998 H1865Z" fill="#3fbfbf"/>
<ellipse cx="1865" cy="998" rx="11" ry="4.5" fill="none" stroke="#d2d2d2" stroke-width="1.2" transform="rotate(-25 1865 998)"/>
<circle cx="1645.5" cy="990.8" r="2" fill="#bbb"/><circle cx="1660.5" cy="990.8" r="2" fill="#bbb"/>
<rect x="1650" y="987.5" width="6" height="6" fill="none" stroke="#ddd" stroke-width="1"/><rect x="1652" y="989.5" width="2" height="2" fill="#3fbfbf"/>
<path d="M1647 995 Q1647 1003 1643 1007 M1659 995 Q1659 1003 1663 1007" stroke="#3fbfbf" stroke-width="1.6" fill="none"/>
<g fill="#ddd"><path d="M1665 1008 V1013 H1660Z M1818 1008 V1013 H1813Z M1846 1008 V1013 H1841Z M1873 1008 V1013 H1868Z M1906 980 V985 H1901Z M1876 980 V985 H1871Z"/></g>
</svg>
<!-- RENDER WINDOW -->
<div class="a" style="left:342px;top:110px;width:1294px;height:894px;background:#848484;border-radius:8px 8px 8px 8px;overflow:hidden;box-shadow:0 0 6px rgba(0,0,0,0.35)"></div>
<svg style="left:0;top:0" width="1919" height="1013" viewBox="0 0 1919 1013">
<defs><clipPath id="wclip"><rect x="342" y="110" width="1294" height="894" rx="8"/></clipPath></defs>
<g clip-path="url(#wclip)">
<rect x="342" y="110" width="1294" height="37" fill="#eff1f8"/>
<rect x="342" y="147" width="1294" height="123" fill="#444"/>
<rect x="343" y="148.5" width="628" height="77" rx="4" fill="#4e4e4e" stroke="#3c3c3c" stroke-width="1"/>
<rect x="971" y="148.5" width="10" height="77" fill="#3e3e3e"/>
<rect x="1494" y="148.5" width="138" height="78" rx="4" fill="#4e4e4e" stroke="#3c3c3c" stroke-width="1"/>
<rect x="1632" y="148" width="4" height="80" fill="#444"/>
<rect x="342" y="228.5" width="1294" height="2.5" fill="#262626"/>
<rect x="342" y="266.5" width="1294" height="3.5" fill="#1e1e1e"/>
<rect x="342" y="270" width="1294" height="734" fill="#848484"/>
<rect x="353" y="281" width="1282" height="722" fill="#000"/>
</g>
<!-- title -->
<svg x="352" y="119" width="19" height="20" viewBox="0 0 19 21">
  <path d="M1 2 L3 0 H17 L19 2 V19 L18 21 H5 L1 19 Z" fill="#4fb3d6"/>
  <rect x="3" y="0" width="16" height="15" fill="#2fa3cc" rx="1"/>
  <rect x="4" y="14.5" width="15" height="6.5" fill="#2a6d85"/>
  <text x="11" y="12" font-family="Liberation Sans" font-weight="bold" font-size="11" fill="#fff" text-anchor="middle">3</text>
  <text x="11.5" y="19.8" font-family="Liberation Sans" font-weight="bold" font-size="4.5" fill="#9cc7d6" text-anchor="middle">MAX</text>
</svg>
<text x="378" y="133.5" font-family="Liberation Sans" font-size="14.5" fill="#1b1b1b" textLength="508" lengthAdjust="spacingAndGlyphs">Orthographic, frame 0, Display Gamma: 2.2, RGBA Color 16 Bits/Channel (1:1)</text>
<path d="M1483 127.5 H1494" stroke="#222" stroke-width="1"/>
<rect x="1541.5" y="122.5" width="11" height="11" rx="1.5" fill="none" stroke="#222" stroke-width="1.1"/>
<path d="M1600 122 L1611.5 133.5 M1611.5 122 L1600 133.5" stroke="#222" stroke-width="1.1"/>
<!-- panel 1 -->
<g font-family="Liberation Sans" font-size="12.9" fill="#e0e0e0">
<text x="349.3" y="180.6" textLength="91" lengthAdjust="spacingAndGlyphs">Area to Render:</text>
<text x="568" y="180.6" textLength="55" lengthAdjust="spacingAndGlyphs">Viewport:</text>
<text x="757" y="180.6" textLength="85" lengthAdjust="spacingAndGlyphs">Render Preset:</text>
</g>
<rect x="349.6" y="191.6" width="100" height="22.4" fill="#5e5e5e"/>
<rect x="422.5" y="193" width="3.5" height="20" fill="#3e3e3e"/>
<text x="357" y="207.7" font-family="Liberation Sans" font-size="12.6" fill="#dcdcdc" textLength="27" lengthAdjust="spacingAndGlyphs">View</text>
<path d="M433 200 H441 L437 205.5Z" fill="#ddd"/>
<rect x="455.5" y="191" width="22" height="24" rx="3" fill="#555"/>
<rect x="483" y="191" width="22.5" height="24" rx="3" fill="#555"/>
<path d="M457.5 199 V194 H462.5 M463.5 194 H466.5 M457.5 200.5 V203.5" stroke="#3fbfbf" stroke-width="1.4" fill="none"/>
<path d="M464 203.5 V196.5 Q464 195 465.5 195 Q467 195 467 196.5 V201.5 M467 201.5 V194.5 Q467 193 468.5 193 Q470 193 470 194.5 V201.5 M470 201.5 V195 Q470 193.5 471.5 193.5 Q473 193.5 473 195 V202 M473 202 V197 Q473 195.5 474.3 195.5 Q475.6 195.5 475.6 197 V205.5 Q475.6 212.3 469.5 212.3 H467.5 Q464 212.3 461.5 209 L458.5 204.5 Q457.8 203 459.3 202.7 Q460.8 202.5 462 204 L464 206" fill="#d2d2d2" stroke="#555" stroke-width="0.5"/>
<path d="M485 198 V194 H489 M499 194 H503 V198 M485 208 V212 H489 M499 212 H503 V208" stroke="#e0e0e0" stroke-width="1.8" fill="none"/>
<text x="494" y="208" font-family="Liberation Sans" font-size="13" font-weight="bold" fill="#3fc4c4" text-anchor="middle">A</text>
<rect x="568.7" y="191.6" width="133.3" height="22.4" fill="#5e5e5e"/>
<text x="576" y="207.5" font-family="Liberation Sans" font-size="12.6" fill="#dcdcdc" textLength="103" lengthAdjust="spacingAndGlyphs">Quad 4 ...graphic</text>
<rect x="675.5" y="193.5" width="4.5" height="19" fill="#3a3a3a"/>
<path d="M684 200 H692 L688 205.5Z" fill="#ddd"/>
<rect x="716" y="191" width="23" height="24" rx="3" fill="#555"/>
<path d="M724 201 V198 Q724 194.5 727.5 194.5 Q731 194.5 731 198 V201" stroke="#d2d2d2" stroke-width="1.6" fill="none"/>
<rect x="722.5" y="200.5" width="10" height="9.5" rx="1" fill="#d2d2d2"/><rect x="726.8" y="203" width="1.5" height="4" fill="#444"/>
<rect x="757" y="191.6" width="134.2" height="22.4" fill="#5e5e5e"/>
<path d="M760 202.8 H864" stroke="#4a4a4a" stroke-width="1.5"/>
<path d="M874 200 H882 L878 205.5Z" fill="#ddd"/>
<rect x="909" y="191" width="22.5" height="24" rx="3" fill="#555"/>
<rect x="936.6" y="191" width="22.5" height="24" rx="3" fill="#555"/>
<path d="M911 199 H927 Q929 201 926.5 206 L922 209 H916Z" fill="#d2d2d2"/><rect x="917.5" y="196" width="4" height="3" fill="#d2d2d2"/>
<circle cx="925" cy="206.5" r="3.2" fill="#f5a81c"/><circle cx="925" cy="206.5" r="1.2" fill="#555"/>
<rect x="939.5" y="194.5" width="17" height="17" fill="#d2d2d2" stroke="#333" stroke-width="0.8"/>
<path d="M940 211 L956 195 V211Z" fill="#333"/>
<path d="M942.5 200 H947.5 M945 197.5 V202.5" stroke="#333" stroke-width="1.2"/><path d="M949.5 207 H954" stroke="#d2d2d2" stroke-width="1.2"/>
<!-- panel right -->
<rect x="1500.3" y="154.3" width="128.7" height="27.7" rx="5" fill="#5f5f5f"/>
<text x="1564.5" y="173" font-family="Liberation Sans" font-size="13" fill="#e0e0e0" text-anchor="middle">Render</text>
<rect x="1500.3" y="191.8" width="128.7" height="22.5" fill="#5e5e5e"/>
<text x="1507.8" y="207.5" font-family="Liberation Sans" font-size="12.6" fill="#dcdcdc" textLength="60" lengthAdjust="spacingAndGlyphs">Production</text>
<path d="M1612 200 H1620 L1616 205.5Z" fill="#ddd"/>
<!-- toolbar -->
<path d="M346 242.5 Q346 241 347.5 241 H362.5 Q364 241 364 242.5 V256.8 Q364 258.5 362.3 258.5 H348.5 L346 256Z" fill="#d2d2d2"/>
<rect x="349" y="241.5" width="12" height="6.8" fill="#d2d2d2" stroke="#444" stroke-width="1"/>
<rect x="350.3" y="251.3" width="10.5" height="7" fill="#d2d2d2" stroke="#444" stroke-width="1.4"/>
<rect x="353.3" y="252.5" width="2.8" height="5" fill="#444"/>
<path d="M374 241 H381 V255 H374Z" fill="#d2d2d2"/>
<path d="M378 244.5 H386 L390 248.5 V258.8 H378Z" fill="#d2d2d2" stroke="#444" stroke-width="1"/>
<rect x="399.5" y="241" width="13" height="5" fill="#d2d2d2"/><rect x="401" y="242.5" width="2" height="2" fill="#333"/><rect x="404" y="242.5" width="2" height="2" fill="#333"/><rect x="407" y="242.5" width="2" height="2" fill="#333"/>
<rect x="404.5" y="247" width="14" height="12" fill="#3fbfbf"/><rect x="404.5" y="247" width="14" height="4" fill="#d2d2d2"/>
<rect x="407" y="248" width="2" height="2" fill="#333"/><rect x="410" y="248" width="2" height="2" fill="#333"/><rect x="413" y="248" width="2" height="2" fill="#333"/>
<rect x="430" y="241" width="11" height="5" fill="#d2d2d2"/>
<path d="M426 247 H445 V256 H426Z" fill="#d2d2d2"/>
<rect x="430" y="252" width="11" height="7" fill="#d2d2d2" stroke="#444" stroke-width="1"/>
<path d="M432 254.5 H439 M432 256.8 H439" stroke="#444" stroke-width="0.8"/>
<path d="M455.5 242.5 L469.5 256.5 M469.5 242.5 L455.5 256.5" stroke="#d2d2d2" stroke-width="3.2"/>
<rect x="567.6" y="238" width="25.2" height="24.8" rx="3" fill="#fff"/>
<rect x="594.5" y="238" width="24.7" height="24.8" rx="3" fill="#fff"/>
<rect x="622" y="238" width="24.7" height="24.8" rx="3" fill="#fff"/>
<circle cx="580.3" cy="250.5" r="6.8" fill="#e8141e" stroke="#333" stroke-width="0.6"/>
<circle cx="607" cy="250.5" r="6.8" fill="#2eaa2e" stroke="#333" stroke-width="0.6"/>
<circle cx="634.4" cy="250.5" r="6.8" fill="#1ea8e8" stroke="#333" stroke-width="0.6"/>
<rect x="651.5" y="240.5" width="19" height="19.5" fill="#3a3a3a" stroke="#bbb" stroke-width="1"/>
<circle cx="661" cy="250.3" r="5" fill="#d2d2d2"/>
<circle cx="687.3" cy="250.3" r="6.3" fill="#d2d2d2"/>
<rect x="710" y="237.5" width="52.5" height="24.5" fill="#fff" stroke="#1a1a1a" stroke-width="1.2"/>
<rect x="779.5" y="239" width="133.7" height="22" fill="#5e5e5e"/>
<text x="787" y="255" font-family="Liberation Sans" font-size="12.6" fill="#dcdcdc" textLength="58.5" lengthAdjust="spacingAndGlyphs">RGB Alpha</text>
<path d="M895 247.5 H903 L899 253Z" fill="#ddd"/>
<rect x="929.7" y="238" width="25.8" height="24.5" rx="3" fill="#fff"/>
<rect x="957.3" y="238" width="25.1" height="24.5" rx="3" fill="#fff"/>
<rect x="933" y="241.5" width="18" height="14" fill="#d2d2d2" stroke="#333" stroke-width="1"/>
<rect x="935.5" y="244" width="13" height="8" fill="none" stroke="#333" stroke-width="0.8"/>
<rect x="960.5" y="241.5" width="18" height="18" fill="#d2d2d2" stroke="#333" stroke-width="1"/>
<path d="M960.5 245.5 H978.5" stroke="#333" stroke-width="1"/>
<path d="M940 255.5 Q946 249 952 255.5 Q946 262 940 255.5Z" fill="#f5a81c" stroke="#333" stroke-width="0.8"/><circle cx="946" cy="255.5" r="2" fill="#333"/>
<path d="M967 255.5 Q973 249 979 255.5 Q973 262 967 255.5Z" fill="#f5a81c" stroke="#333" stroke-width="0.8"/><circle cx="973" cy="255.5" r="2" fill="#333"/>
<path d="M1635.5 270 V1000" stroke="#9a9a9a" stroke-width="1"/>
</svg>
<!-- RENDER IMAGE -->
<svg style="left:0;top:0" width="1919" height="1013" viewBox="0 0 1919 1013">
<defs>
<clipPath id="imgclip"><rect x="353" y="281" width="1282" height="722"/></clipPath>
<pattern id="chk" width="2" height="2" patternUnits="userSpaceOnUse" patternTransform="matrix(31.4 2.6 -6.1 8.3 1121.7 701)">
<rect width="2" height="2" fill="#c4d0cc"/><rect width="1" height="1" fill="#2c5a4e"/><rect x="1" y="1" width="1" height="1" fill="#2c5a4e"/></pattern>
<pattern id="streak" width="64" height="40" patternUnits="userSpaceOnUse"><rect width="64" height="40" fill="#aaa5a3"/><rect x="0.0" width="1.2" height="40" fill="#ada8a6"/><rect x="2.7" width="1.2" height="40" fill="#aca7a5"/><rect x="4.4" width="0.8" height="40" fill="#b5b0ae"/><rect x="6.7" width="2" height="40" fill="#afaaa8"/><rect x="9.2" width="0.6" height="40" fill="#aaa5a3"/><rect x="10.8" width="0.8" height="40" fill="#9e9997"/><rect x="11.6" width="1.5" height="40" fill="#a8a3a1"/><rect x="14.6" width="2" height="40" fill="#b3aeac"/><rect x="17.1" width="1.5" height="40" fill="#9c9795"/><rect x="18.6" width="0.6" height="40" fill="#9d9896"/><rect x="19.7" width="0.8" height="40" fill="#afaaa8"/><rect x="20.5" width="1.2" height="40" fill="#a6a19f"/><rect x="23.2" width="1.5" height="40" fill="#b6b1af"/><rect x="25.2" width="1.5" height="40" fill="#a39e9c"/><rect x="27.7" width="1.2" height="40" fill="#9c9795"/><rect x="28.9" width="1.2" height="40" fill="#b0aba9"/><rect x="31.1" width="1.2" height="40" fill="#ada8a6"/><rect x="32.3" width="2" height="40" fill="#a49f9d"/><rect x="35.3" width="0.8" height="40" fill="#aca7a5"/><rect x="37.1" width="0.6" height="40" fill="#9e9997"/><rect x="37.7" width="1.2" height="40" fill="#9f9a98"/><rect x="39.9" width="1.2" height="40" fill="#9e9997"/><rect x="41.1" width="2" height="40" fill="#9c9795"/><rect x="43.6" width="0.8" height="40" fill="#9d9896"/><rect x="45.9" width="1.2" height="40" fill="#b2adab"/><rect x="48.6" width="1.2" height="40" fill="#9e9997"/><rect x="50.3" width="2" height="40" fill="#a49f9d"/><rect x="53.3" width="0.6" height="40" fill="#a5a09e"/><rect x="54.9" width="0.6" height="40" fill="#a9a4a2"/><rect x="55.5" width="0.8" height="40" fill="#a39e9c"/><rect x="56.3" width="0.6" height="40" fill="#9d9896"/><rect x="58.4" width="1.2" height="40" fill="#a19c9a"/><rect x="60.1" width="1.2" height="40" fill="#aca7a5"/><rect x="61.8" width="2" height="40" fill="#b4afad"/></pattern><pattern id="streakd" width="48" height="40" patternUnits="userSpaceOnUse"><rect width="48" height="40" fill="#3d3b3a"/><rect x="0.0" width="1.2" height="40" fill="#474544"/><rect x="1.7" width="0.6" height="40" fill="#3f3d3c"/><rect x="2.8" width="0.8" height="40" fill="#333130"/><rect x="4.1" width="1.5" height="40" fill="#3c3a39"/><rect x="5.6" width="0.8" height="40" fill="#383635"/><rect x="6.9" width="1.5" height="40" fill="#474544"/><rect x="9.4" width="0.6" height="40" fill="#343231"/><rect x="10.0" width="0.8" height="40" fill="#413f3e"/><rect x="11.3" width="0.6" height="40" fill="#464443"/><rect x="12.4" width="1" height="40" fill="#3f3d3c"/><rect x="13.4" width="0.6" height="40" fill="#353332"/><rect x="14.0" width="1.5" height="40" fill="#474544"/><rect x="15.5" width="0.6" height="40" fill="#464443"/><rect x="16.6" width="1" height="40" fill="#464443"/><rect x="18.1" width="0.8" height="40" fill="#454342"/><rect x="19.4" width="1.5" height="40" fill="#373534"/><rect x="21.4" width="0.8" height="40" fill="#474544"/><rect x="22.2" width="1" height="40" fill="#3a3837"/><rect x="24.2" width="0.8" height="40" fill="#393736"/><rect x="25.0" width="1.5" height="40" fill="#393736"/><rect x="27.5" width="1.2" height="40" fill="#42403f"/><rect x="29.7" width="0.6" height="40" fill="#403e3d"/><rect x="30.3" width="0.6" height="40" fill="#363433"/><rect x="30.9" width="1.5" height="40" fill="#3b3938"/><rect x="32.4" width="1.2" height="40" fill="#3b3938"/><rect x="34.1" width="1.5" height="40" fill="#42403f"/><rect x="36.1" width="1.5" height="40" fill="#383635"/><rect x="38.6" width="0.6" height="40" fill="#373534"/><rect x="39.2" width="1.2" height="40" fill="#444241"/><rect x="41.4" width="1.5" height="40" fill="#464443"/><rect x="42.9" width="1" height="40" fill="#393736"/><rect x="43.9" width="0.6" height="40" fill="#353332"/><rect x="45.0" width="1.2" height="40" fill="#413f3e"/><rect x="46.2" width="0.6" height="40" fill="#343231"/><rect x="46.8" width="1" height="40" fill="#3e3c3b"/></pattern><linearGradient id="topg" x1="0" y1="0" x2="1" y2="1"><stop offset="0" stop-color="#a19d9b"/><stop offset="0.5" stop-color="#aeaaa8"/><stop offset="1" stop-color="#a3a09e"/></linearGradient>
<linearGradient id="leftg" x1="0" y1="0" x2="1" y2="0"><stop offset="0" stop-color="#484544"/><stop offset="1" stop-color="#42403f"/></linearGradient>
<clipPath id="winclip"><polygon points="855.7,623.5 956.8,611.4 956.8,770.2 855.7,782.3"/><polygon points="974.0,609.3 1075.3,597.1 1075.3,755.9 974.0,768.1"/><polygon points="1095.3,594.7 1195.3,582.7 1195.3,741.5 1095.3,753.5"/><polygon points="1212.6,580.6 1314.7,568.4 1314.7,727.2 1212.6,739.4"/></clipPath>
</defs>
<g clip-path="url(#imgclip)">
<polygon points="247.0,689.0 1370.0,553.5 1767.0,757.0 645.3,893.7" fill="#6a2b9f"/>
<polygon points="247.0,689.0 645.3,893.7 645.3,904.8 247.0,700.0" fill="#2e1646"/>
<polygon points="645.3,893.7 1767.0,757.0 1767.0,768.5 645.3,904.8" fill="#7433b2"/>
<polygon points="666.4,524.0 838.5,612.3 838.5,799.1 666.4,710.2" fill="url(#leftg)"/>
<polygon points="666.4,700.4 838.5,789.0 838.5,799.1 666.4,710.2" fill="url(#streakd)"/>
<polygon points="666.4,524.0 838.5,612.3 838.5,624.0 666.4,535.5" fill="url(#streakd)" opacity="0.45"/>
<clipPath id="topclip"><polygon points="666.4,524.0 1160.0,464.0 1333.0,552.9 838.5,612.3"/></clipPath>
<polygon points="666.4,524.0 1160.0,464.0 1333.0,552.9 838.5,612.3" fill="url(#topg)"/>
<g clip-path="url(#topclip)">
<ellipse cx="852.2" cy="517.9" rx="1.4" ry="0.8" fill="#5e5a58" opacity="0.28"/>
<ellipse cx="993.8" cy="524.1" rx="0.8" ry="0.4" fill="#5e5a58" opacity="0.43"/>
<ellipse cx="759.5" cy="560.0" rx="0.8" ry="0.4" fill="#5e5a58" opacity="0.28"/>
<ellipse cx="1018.2" cy="571.5" rx="0.8" ry="0.5" fill="#5e5a58" opacity="0.33"/>
<ellipse cx="1139.2" cy="570.0" rx="1.3" ry="0.8" fill="#5e5a58" opacity="0.39"/>
<ellipse cx="1156.3" cy="469.5" rx="1.7" ry="0.9" fill="#5e5a58" opacity="0.35"/>
<ellipse cx="757.9" cy="525.7" rx="1.0" ry="0.6" fill="#5e5a58" opacity="0.54"/>
<ellipse cx="855.7" cy="564.5" rx="1.4" ry="0.8" fill="#5e5a58" opacity="0.38"/>
<ellipse cx="947.6" cy="496.7" rx="0.8" ry="0.4" fill="#5e5a58" opacity="0.32"/>
<ellipse cx="1075.8" cy="520.9" rx="1.1" ry="0.6" fill="#5e5a58" opacity="0.45"/>
<ellipse cx="941.7" cy="523.3" rx="1.6" ry="0.9" fill="#5e5a58" opacity="0.49"/>
<ellipse cx="885.7" cy="560.1" rx="1.3" ry="0.7" fill="#5e5a58" opacity="0.56"/>
<ellipse cx="1076.0" cy="505.7" rx="1.8" ry="1.0" fill="#5e5a58" opacity="0.29"/>
<ellipse cx="1003.1" cy="565.8" rx="0.9" ry="0.5" fill="#5e5a58" opacity="0.42"/>
<ellipse cx="800.8" cy="580.7" rx="1.6" ry="0.9" fill="#5e5a58" opacity="0.45"/>
<ellipse cx="1152.5" cy="499.2" rx="1.5" ry="0.8" fill="#5e5a58" opacity="0.46"/>
<ellipse cx="1031.1" cy="529.5" rx="1.6" ry="0.9" fill="#5e5a58" opacity="0.58"/>
<ellipse cx="1014.7" cy="554.2" rx="0.8" ry="0.4" fill="#5e5a58" opacity="0.50"/>
<ellipse cx="1156.7" cy="572.9" rx="1.6" ry="0.9" fill="#5e5a58" opacity="0.35"/>
<ellipse cx="971.9" cy="559.9" rx="0.7" ry="0.4" fill="#5e5a58" opacity="0.41"/>
<ellipse cx="769.5" cy="524.3" rx="0.8" ry="0.4" fill="#5e5a58" opacity="0.52"/>
<ellipse cx="772.9" cy="538.1" rx="1.1" ry="0.7" fill="#5e5a58" opacity="0.55"/>
<ellipse cx="783.5" cy="558.8" rx="1.3" ry="0.8" fill="#5e5a58" opacity="0.56"/>
<ellipse cx="1219.5" cy="551.1" rx="1.0" ry="0.6" fill="#5e5a58" opacity="0.40"/>
<ellipse cx="995.7" cy="580.5" rx="1.8" ry="1.0" fill="#5e5a58" opacity="0.30"/>
<ellipse cx="793.3" cy="533.9" rx="1.0" ry="0.5" fill="#5e5a58" opacity="0.42"/>
<ellipse cx="1002.4" cy="511.9" rx="0.7" ry="0.4" fill="#5e5a58" opacity="0.40"/>
<ellipse cx="946.1" cy="551.9" rx="1.8" ry="1.0" fill="#5e5a58" opacity="0.49"/>
<ellipse cx="1027.1" cy="547.6" rx="1.5" ry="0.8" fill="#5e5a58" opacity="0.27"/>
<ellipse cx="1244.6" cy="538.9" rx="1.7" ry="1.0" fill="#5e5a58" opacity="0.53"/>
<ellipse cx="928.7" cy="535.7" rx="0.8" ry="0.5" fill="#5e5a58" opacity="0.47"/>
<ellipse cx="708.7" cy="526.2" rx="0.9" ry="0.5" fill="#5e5a58" opacity="0.31"/>
<ellipse cx="843.3" cy="508.2" rx="0.7" ry="0.4" fill="#5e5a58" opacity="0.30"/>
<ellipse cx="779.1" cy="550.0" rx="0.7" ry="0.4" fill="#5e5a58" opacity="0.56"/>
<ellipse cx="995.1" cy="500.3" rx="1.0" ry="0.6" fill="#5e5a58" opacity="0.37"/>
<ellipse cx="867.3" cy="513.0" rx="1.7" ry="0.9" fill="#5e5a58" opacity="0.60"/>
<ellipse cx="979.7" cy="538.8" rx="0.8" ry="0.5" fill="#5e5a58" opacity="0.29"/>
<ellipse cx="881.1" cy="526.8" rx="1.6" ry="0.9" fill="#5e5a58" opacity="0.31"/>
<ellipse cx="841.5" cy="606.6" rx="1.3" ry="0.7" fill="#5e5a58" opacity="0.30"/>
<ellipse cx="939.2" cy="493.8" rx="1.3" ry="0.7" fill="#5e5a58" opacity="0.59"/>
<ellipse cx="1212.4" cy="533.7" rx="1.0" ry="0.6" fill="#5e5a58" opacity="0.38"/>
<ellipse cx="881.7" cy="582.1" rx="1.3" ry="0.7" fill="#5e5a58" opacity="0.52"/>
<ellipse cx="867.5" cy="523.9" rx="1.6" ry="0.9" fill="#5e5a58" opacity="0.59"/>
<ellipse cx="1226.0" cy="544.0" rx="1.6" ry="0.9" fill="#5e5a58" opacity="0.51"/>
<ellipse cx="867.4" cy="556.1" rx="1.1" ry="0.6" fill="#5e5a58" opacity="0.26"/>
<ellipse cx="728.3" cy="547.0" rx="1.0" ry="0.6" fill="#5e5a58" opacity="0.49"/>
<ellipse cx="1215.5" cy="506.1" rx="1.7" ry="1.0" fill="#5e5a58" opacity="0.60"/>
<ellipse cx="1200.5" cy="498.9" rx="0.9" ry="0.5" fill="#5e5a58" opacity="0.33"/>
<ellipse cx="798.7" cy="530.2" rx="1.4" ry="0.8" fill="#5e5a58" opacity="0.57"/>
<ellipse cx="1163.8" cy="515.9" rx="1.4" ry="0.8" fill="#5e5a58" opacity="0.53"/>
<ellipse cx="821.9" cy="577.2" rx="1.7" ry="1.0" fill="#5e5a58" opacity="0.52"/>
<ellipse cx="1118.9" cy="521.2" rx="0.9" ry="0.5" fill="#5e5a58" opacity="0.53"/>
<ellipse cx="968.4" cy="574.8" rx="1.8" ry="1.0" fill="#5e5a58" opacity="0.39"/>
<ellipse cx="1027.5" cy="583.5" rx="1.5" ry="0.9" fill="#5e5a58" opacity="0.31"/>
<ellipse cx="755.1" cy="529.7" rx="1.7" ry="1.0" fill="#5e5a58" opacity="0.53"/>
<ellipse cx="880.8" cy="588.2" rx="1.8" ry="1.0" fill="#5e5a58" opacity="0.48"/>
<ellipse cx="933.8" cy="551.4" rx="0.8" ry="0.5" fill="#5e5a58" opacity="0.25"/>
<ellipse cx="1257.4" cy="523.1" rx="1.3" ry="0.7" fill="#5e5a58" opacity="0.58"/>
<ellipse cx="1030.6" cy="574.9" rx="1.6" ry="0.9" fill="#5e5a58" opacity="0.32"/>
<ellipse cx="841.1" cy="534.8" rx="1.0" ry="0.6" fill="#5e5a58" opacity="0.46"/>
<ellipse cx="866.5" cy="545.4" rx="0.8" ry="0.5" fill="#5e5a58" opacity="0.57"/>
<ellipse cx="919.9" cy="543.2" rx="1.4" ry="0.8" fill="#5e5a58" opacity="0.57"/>
<ellipse cx="1032.0" cy="579.8" rx="1.3" ry="0.7" fill="#5e5a58" opacity="0.44"/>
<ellipse cx="928.0" cy="494.2" rx="1.2" ry="0.7" fill="#5e5a58" opacity="0.31"/>
<ellipse cx="805.9" cy="594.3" rx="0.9" ry="0.5" fill="#5e5a58" opacity="0.42"/>
<ellipse cx="1120.1" cy="529.6" rx="1.1" ry="0.6" fill="#5e5a58" opacity="0.43"/>
<ellipse cx="1075.5" cy="559.9" rx="0.8" ry="0.5" fill="#5e5a58" opacity="0.45"/>
<ellipse cx="836.7" cy="533.5" rx="1.6" ry="0.9" fill="#5e5a58" opacity="0.43"/>
<ellipse cx="1074.5" cy="557.4" rx="1.7" ry="1.0" fill="#5e5a58" opacity="0.41"/>
<ellipse cx="1055.7" cy="531.9" rx="1.3" ry="0.7" fill="#5e5a58" opacity="0.49"/>
<ellipse cx="981.5" cy="543.9" rx="1.2" ry="0.7" fill="#5e5a58" opacity="0.58"/>
<ellipse cx="1162.4" cy="559.4" rx="1.8" ry="1.0" fill="#5e5a58" opacity="0.34"/>
<ellipse cx="1104.9" cy="573.7" rx="1.6" ry="0.9" fill="#5e5a58" opacity="0.30"/>
<ellipse cx="802.5" cy="555.7" rx="0.8" ry="0.4" fill="#5e5a58" opacity="0.33"/>
<ellipse cx="817.7" cy="578.7" rx="1.6" ry="0.9" fill="#5e5a58" opacity="0.56"/>
<ellipse cx="865.9" cy="578.0" rx="1.4" ry="0.8" fill="#5e5a58" opacity="0.30"/>
<ellipse cx="1268.7" cy="556.5" rx="0.9" ry="0.5" fill="#5e5a58" opacity="0.58"/>
<ellipse cx="946.8" cy="543.1" rx="1.8" ry="1.0" fill="#5e5a58" opacity="0.54"/>
<ellipse cx="820.4" cy="552.4" rx="1.3" ry="0.7" fill="#5e5a58" opacity="0.37"/>
<ellipse cx="817.8" cy="540.4" rx="1.5" ry="0.9" fill="#5e5a58" opacity="0.26"/>
<ellipse cx="1015.7" cy="529.6" rx="0.7" ry="0.4" fill="#5e5a58" opacity="0.37"/>
<ellipse cx="1062.5" cy="531.8" rx="0.8" ry="0.4" fill="#5e5a58" opacity="0.59"/>
<ellipse cx="1222.8" cy="562.5" rx="0.8" ry="0.5" fill="#5e5a58" opacity="0.34"/>
<ellipse cx="820.0" cy="590.4" rx="1.0" ry="0.6" fill="#5e5a58" opacity="0.30"/>
<ellipse cx="1031.7" cy="579.1" rx="1.6" ry="0.9" fill="#5e5a58" opacity="0.34"/>
<ellipse cx="898.3" cy="596.2" rx="1.3" ry="0.8" fill="#5e5a58" opacity="0.50"/>
<ellipse cx="720.5" cy="523.7" rx="1.5" ry="0.8" fill="#5e5a58" opacity="0.40"/>
<ellipse cx="863.6" cy="602.5" rx="1.4" ry="0.8" fill="#5e5a58" opacity="0.53"/>
<ellipse cx="855.1" cy="594.6" rx="0.8" ry="0.4" fill="#5e5a58" opacity="0.55"/>
<ellipse cx="948.8" cy="526.7" rx="1.3" ry="0.8" fill="#5e5a58" opacity="0.57"/>
<ellipse cx="820.9" cy="519.3" rx="1.3" ry="0.7" fill="#5e5a58" opacity="0.33"/>
<ellipse cx="748.2" cy="531.7" rx="0.8" ry="0.4" fill="#5e5a58" opacity="0.32"/>
<ellipse cx="872.9" cy="532.2" rx="1.6" ry="0.9" fill="#5e5a58" opacity="0.35"/>
<ellipse cx="943.9" cy="509.7" rx="1.1" ry="0.6" fill="#5e5a58" opacity="0.26"/>
<ellipse cx="792.7" cy="510.3" rx="1.5" ry="0.9" fill="#5e5a58" opacity="0.44"/>
<ellipse cx="841.6" cy="554.6" rx="1.7" ry="1.0" fill="#5e5a58" opacity="0.29"/>
<ellipse cx="1145.0" cy="513.0" rx="1.3" ry="0.7" fill="#5e5a58" opacity="0.54"/>
<ellipse cx="947.6" cy="545.2" rx="1.5" ry="0.8" fill="#5e5a58" opacity="0.59"/>
<ellipse cx="978.8" cy="576.9" rx="1.5" ry="0.9" fill="#5e5a58" opacity="0.47"/>
<ellipse cx="926.0" cy="530.4" rx="0.8" ry="0.4" fill="#5e5a58" opacity="0.30"/>
<ellipse cx="828.8" cy="585.2" rx="1.0" ry="0.6" fill="#5e5a58" opacity="0.31"/>
<ellipse cx="852.9" cy="593.2" rx="1.7" ry="1.0" fill="#5e5a58" opacity="0.48"/>
<ellipse cx="847.2" cy="528.5" rx="1.0" ry="0.6" fill="#5e5a58" opacity="0.41"/>
<ellipse cx="820.9" cy="553.9" rx="1.0" ry="0.6" fill="#5e5a58" opacity="0.59"/>
<ellipse cx="1240.6" cy="513.9" rx="1.0" ry="0.6" fill="#5e5a58" opacity="0.59"/>
<ellipse cx="880.6" cy="536.9" rx="0.7" ry="0.4" fill="#5e5a58" opacity="0.38"/>
<ellipse cx="987.2" cy="539.9" rx="0.9" ry="0.5" fill="#5e5a58" opacity="0.43"/>
<ellipse cx="714.3" cy="547.0" rx="0.8" ry="0.5" fill="#5e5a58" opacity="0.39"/>
<ellipse cx="690.8" cy="523.5" rx="1.0" ry="0.6" fill="#5e5a58" opacity="0.33"/>
<ellipse cx="1046.5" cy="535.6" rx="1.5" ry="0.9" fill="#5e5a58" opacity="0.48"/>
<ellipse cx="1171.1" cy="558.7" rx="25" ry="9" fill="#9a9694" opacity="0.12"/>
<ellipse cx="1178.2" cy="478.1" rx="33" ry="11" fill="#9a9694" opacity="0.12"/>
<ellipse cx="831.8" cy="595.1" rx="37" ry="11" fill="#9a9694" opacity="0.12"/>
<ellipse cx="1168.4" cy="551.7" rx="18" ry="10" fill="#9a9694" opacity="0.12"/>
<ellipse cx="1059.1" cy="567.5" rx="35" ry="13" fill="#9a9694" opacity="0.12"/>
<ellipse cx="1108.3" cy="567.8" rx="32" ry="12" fill="#9a9694" opacity="0.12"/>
<ellipse cx="785.3" cy="513.0" rx="18" ry="9" fill="#9a9694" opacity="0.12"/>
<ellipse cx="862.0" cy="591.5" rx="29" ry="11" fill="#9a9694" opacity="0.12"/>
<ellipse cx="1092.6" cy="546.5" rx="27" ry="6" fill="#9a9694" opacity="0.12"/>
<ellipse cx="1188.9" cy="542.2" rx="28" ry="10" fill="#9a9694" opacity="0.12"/>
<ellipse cx="1003.2" cy="490.3" rx="33" ry="8" fill="#9a9694" opacity="0.12"/>
<ellipse cx="748.9" cy="543.0" rx="33" ry="8" fill="#9a9694" opacity="0.12"/>
<ellipse cx="1199.5" cy="565.8" rx="27" ry="9" fill="#9a9694" opacity="0.12"/>
<ellipse cx="1020.5" cy="555.6" rx="34" ry="11" fill="#9a9694" opacity="0.12"/>
<ellipse cx="997.0" cy="492.3" rx="19" ry="8" fill="#9a9694" opacity="0.12"/>
<ellipse cx="1085.6" cy="506.3" rx="29" ry="6" fill="#9a9694" opacity="0.12"/>
<ellipse cx="742.6" cy="544.1" rx="32" ry="12" fill="#9a9694" opacity="0.12"/>
<ellipse cx="1050.0" cy="509.1" rx="28" ry="10" fill="#9a9694" opacity="0.12"/>
<ellipse cx="917.0" cy="506.5" rx="37" ry="8" fill="#9a9694" opacity="0.12"/>
<ellipse cx="1310.3" cy="548.0" rx="15" ry="10" fill="#9a9694" opacity="0.12"/>
<ellipse cx="1237.7" cy="560.3" rx="26" ry="8" fill="#9a9694" opacity="0.12"/>
<ellipse cx="932.7" cy="594.9" rx="20" ry="11" fill="#9a9694" opacity="0.12"/>
<ellipse cx="826.6" cy="561.8" rx="39" ry="7" fill="#9a9694" opacity="0.12"/>
<ellipse cx="1158.8" cy="519.7" rx="37" ry="12" fill="#9a9694" opacity="0.12"/>
<ellipse cx="935.1" cy="589.4" rx="27" ry="6" fill="#9a9694" opacity="0.12"/>
</g>
<polygon points="838.5,612.3 1333.0,552.9 1333.0,739.7 838.5,799.1" fill="url(#streak)"/>
<g clip-path="url(#winclip)">
<rect x="850" y="560" width="470" height="230" fill="#466a5f"/>
<polygon points="855.7,680.0 957.0,676.0 957.0,790.0 855.7,790.0" fill="url(#chk)"/>
<rect x="855.7" y="600" width="3.8" height="98" fill="#8d9893"/>
<rect x="859.4" y="600" width="11.2" height="80.7" fill="#2a9bc9"/>
<rect x="859.4" y="655" width="11.2" height="25" fill="#2688b5" opacity="0.7"/>
<polygon points="870.6,600.0 876.3,600.0 876.3,730.4 870.6,729.5" fill="#5d7a70"/>
<polygon points="876.3,600.0 889.0,600.0 889.0,730.0 876.3,730.4" fill="#a8b1ac"/>
<polygon points="897.8,600.0 899.7,600.0 899.7,698.5 897.8,697.5" fill="#4d6b61"/>
<polygon points="899.7,600.0 949.4,600.0 949.4,692.9 899.7,698.5" fill="#a9b1ac"/>
<rect x="952.5" y="600" width="4.5" height="190" fill="#3b5a50"/>
<polygon points="974.0,715.7 1070.7,756.0 1076.0,757.0 1076.0,790.0 974.0,790.0" fill="url(#chk)"/>
<polygon points="960.0,577.0 1030.5,612.1 1030.5,656.6 960.0,621.5" fill="#5e5a42"/>
<polygon points="960.0,577.0 983.0,574.7 1053.8,609.7 1030.5,612.1" fill="#d4833e"/>
<polygon points="1030.5,612.1 1053.8,609.7 1053.8,653.8 1030.5,656.6" fill="#e58a41"/>
<polygon points="923.2,652.5 1030.5,705.4 1030.5,744.8 923.2,691.9" fill="#5e5a42"/>
<polygon points="923.2,652.5 946.5,649.7 1053.8,702.6 1030.5,705.4" fill="#d4833e"/>
<polygon points="1030.5,705.4 1053.8,702.6 1053.8,741.0 1030.5,744.8" fill="#e58a41"/>
<polygon points="1095.3,673.8 1196.0,673.8 1196.0,790.0 1095.3,790.0" fill="url(#chk)"/>
<polygon points="1109.8,580.0 1115.7,580.0 1115.7,700.5 1109.8,698.0" fill="#55746a"/>
<polygon points="1115.7,580.0 1128.6,580.0 1128.6,700.0 1115.7,700.5" fill="#a7b0ab"/>
<polygon points="1128.6,580.0 1138.9,580.0 1138.9,696.0 1128.6,692.0" fill="#4b6a60"/>
<polygon points="1138.9,580.0 1192.2,580.0 1192.2,691.0 1138.9,696.0" fill="#a9b1ac"/>
<rect x="1192.2" y="570" width="3.3" height="220" fill="#3b5a50"/>
<polygon points="1212.6,686.6 1231.0,685.3 1304.5,723.9 1316.0,728.0 1316.0,790.0 1212.6,790.0" fill="url(#chk)"/>
<polygon points="1212.6,560.0 1231.2,560.0 1231.2,685.3 1212.6,686.6" fill="#a6aea9"/>
</g>
<polygon points="855.7,623.5 956.8,611.4 956.8,770.2 855.7,782.3" fill="none" stroke="#837d7b" stroke-width="1.2"/>
<polygon points="974.0,609.3 1075.3,597.1 1075.3,755.9 974.0,768.1" fill="none" stroke="#837d7b" stroke-width="1.2"/>
<polygon points="1095.3,594.7 1195.3,582.7 1195.3,741.5 1095.3,753.5" fill="none" stroke="#837d7b" stroke-width="1.2"/>
<polygon points="1212.6,580.6 1314.7,568.4 1314.7,727.2 1212.6,739.4" fill="none" stroke="#837d7b" stroke-width="1.2"/>
<polyline points="838.5,612.8 1333.0,553.4" fill="none" stroke="#bdb8b6" stroke-width="1" opacity="0.6"/>
</g></svg>
</body></html>
